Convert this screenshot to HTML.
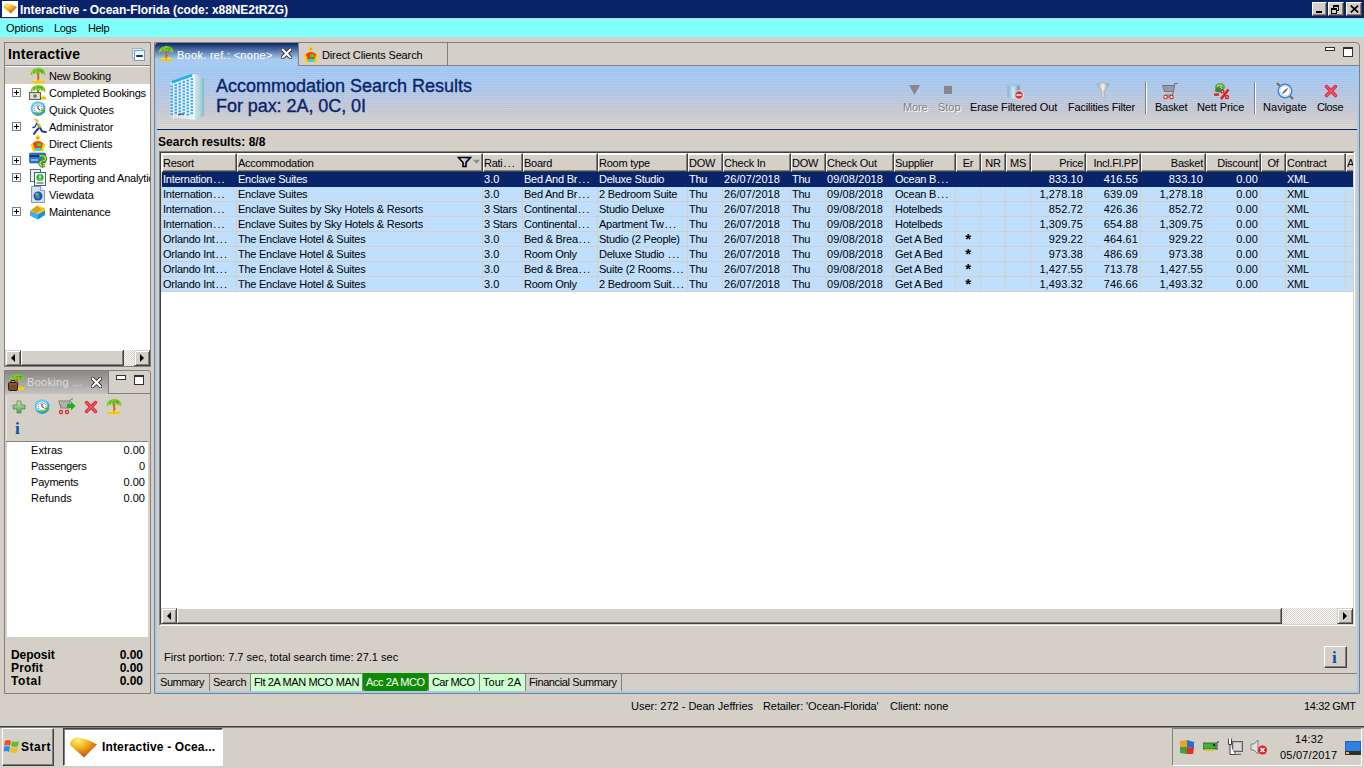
<!DOCTYPE html><html><head><meta charset="utf-8"><style>
*{margin:0;padding:0;box-sizing:border-box}
html,body{width:1364px;height:768px;overflow:hidden;background:#D4D0C8;font-family:"Liberation Sans", sans-serif;font-size:11px;color:#000}
.a{position:absolute}
.t{position:absolute;white-space:nowrap;line-height:13px}
.b{font-weight:bold}
</style></head><body><div class="a" style="left:0;top:0;width:1364px;height:18px;background:#0A246A"></div>
<div class="a" style="left:2px;top:1px;width:16px;height:16px;background:#fff"></div>
<svg class="a" style="left:2px;top:1px" width="16" height="16" viewBox="0 0 16 16"><defs><radialGradient id="gic" cx="0.3" cy="0.2" r="0.95"><stop offset="0" stop-color="#FFF070"/><stop offset="0.4" stop-color="#F4B020"/><stop offset="0.8" stop-color="#D06010"/><stop offset="1" stop-color="#B04010"/></radialGradient></defs><path d="M1.5 6.5 Q2 2.5 5.5 2.5 Q10.5 3.5 15 6 L9 12.5 Z" fill="url(#gic)"/></svg>
<div class="t b" style="left:20px;top:3px;color:#fff;font-size:12px;line-height:14px;letter-spacing:-0.061px;">Interactive - Ocean-Florida (code: x88NE2tRZG)</div>
<div class="a" style="left:1312px;top:2px;width:15px;height:14px;background:#D4D0C8;border-top:1px solid #fff;border-left:1px solid #fff;border-right:1px solid #404040;border-bottom:1px solid #404040;box-shadow:inset -1px -1px 0 #808080"><div class="a" style="left:3px;top:8px;width:6px;height:2px;background:#000"></div></div>
<div class="a" style="left:1328px;top:2px;width:16px;height:14px;background:#D4D0C8;border-top:1px solid #fff;border-left:1px solid #fff;border-right:1px solid #404040;border-bottom:1px solid #404040;box-shadow:inset -1px -1px 0 #808080"><div class="a" style="left:4px;top:2px;width:6px;height:6px;border:1px solid #000;border-top-width:2px"></div><div class="a" style="left:2px;top:5px;width:6px;height:6px;border:1px solid #000;border-top-width:2px;background:#D4D0C8"></div></div>
<div class="a" style="left:1346px;top:2px;width:16px;height:14px;background:#D4D0C8;border-top:1px solid #fff;border-left:1px solid #fff;border-right:1px solid #404040;border-bottom:1px solid #404040;box-shadow:inset -1px -1px 0 #808080"><svg class="a" style="left:3px;top:2px" width="9" height="8"><path d="M0.8 0.6 L8.2 7.4 M8.2 0.6 L0.8 7.4" stroke="#000" stroke-width="1.8"/></svg></div>
<div class="a" style="left:0;top:18px;width:1364px;height:1px;background:#d4d0c8"></div>
<div class="a" style="left:0;top:19px;width:1364px;height:18px;background:#80FFFF"></div>
<div class="t" style="left:6px;top:22px;letter-spacing:-0.068px;">Options</div>
<div class="t" style="left:54px;top:22px;letter-spacing:-0.384px;">Logs</div>
<div class="t" style="left:88px;top:22px;letter-spacing:-0.374px;">Help</div>
<div class="a" style="left:4px;top:42px;width:147px;height:325px;border:1px solid #808080;background:#D4D0C8"></div>
<div class="t b" style="left:8px;top:46px;font-size:14px;line-height:16px;letter-spacing:0.197px;">Interactive</div>
<div class="a" style="left:132px;top:48px;width:11px;height:11px;border:1px solid #a0b0d0;background:#d8f0ff"></div>
<div class="a" style="left:134px;top:50px;width:11px;height:11px;border:1px solid #8898b8;background:linear-gradient(#e0f6ff,#fff)"><div class="a" style="left:1px;top:4px;width:7px;height:1.5px;background:#063a78;border-radius:1px"></div></div>
<div class="a" style="left:5px;top:65px;width:145px;height:1px;background:#808080"></div>
<div class="a" style="left:5px;top:66px;width:145px;height:1px;background:#fff"></div>
<div class="a" style="left:5px;top:67px;width:145px;height:283px;background:#fff"></div>
<div class="a" style="left:5px;top:67px;width:145px;height:17px;background:#D4D0C8"></div>
<div class="a" style="left:5px;top:67px;width:145px;height:160px;overflow:hidden">
<div class="t" style="left:44px;top:3px;letter-spacing:-0.281px;">New Booking</div>
<div class="a" style="left:7px;top:21px;width:9px;height:9px;border:1px solid #808080;background:#fff"><div class="a" style="left:1px;top:3px;width:5px;height:1px;background:#000"></div><div class="a" style="left:3px;top:1px;width:1px;height:5px;background:#000"></div></div>
<div class="t" style="left:44px;top:20px;letter-spacing:-0.265px;">Completed Bookings</div>
<div class="t" style="left:44px;top:37px;letter-spacing:-0.149px;">Quick Quotes</div>
<div class="a" style="left:7px;top:55px;width:9px;height:9px;border:1px solid #808080;background:#fff"><div class="a" style="left:1px;top:3px;width:5px;height:1px;background:#000"></div><div class="a" style="left:3px;top:1px;width:1px;height:5px;background:#000"></div></div>
<div class="t" style="left:44px;top:54px;letter-spacing:-0.024px;">Administrator</div>
<div class="t" style="left:44px;top:71px;letter-spacing:-0.146px;">Direct Clients</div>
<div class="a" style="left:7px;top:89px;width:9px;height:9px;border:1px solid #808080;background:#fff"><div class="a" style="left:1px;top:3px;width:5px;height:1px;background:#000"></div><div class="a" style="left:3px;top:1px;width:1px;height:5px;background:#000"></div></div>
<div class="t" style="left:44px;top:88px;letter-spacing:-0.201px;">Payments</div>
<div class="a" style="left:7px;top:106px;width:9px;height:9px;border:1px solid #808080;background:#fff"><div class="a" style="left:1px;top:3px;width:5px;height:1px;background:#000"></div><div class="a" style="left:3px;top:1px;width:1px;height:5px;background:#000"></div></div>
<div class="t" style="left:44px;top:105px;letter-spacing:-0.25px;">Reporting and Analytics</div>
<div class="t" style="left:44px;top:122px;letter-spacing:-0.036px;">Viewdata</div>
<div class="a" style="left:7px;top:140px;width:9px;height:9px;border:1px solid #808080;background:#fff"><div class="a" style="left:1px;top:3px;width:5px;height:1px;background:#000"></div><div class="a" style="left:3px;top:1px;width:1px;height:5px;background:#000"></div></div>
<div class="t" style="left:44px;top:139px;letter-spacing:-0.128px;">Maintenance</div>
</div>
<svg class="a" style="left:30px;top:67px" width="16" height="17" viewBox="0 0 16 17"><path d="M1 14.5 Q2 12.8 8 12.8 Q14 12.8 15 14 Q14 16 8 16 Q2 16 1 14.5Z" fill="#F4C800"/><path d="M3 13.6 Q8 12.6 13 13.4" stroke="#FFE860" stroke-width="1" fill="none"/><path d="M7.5 5 Q8.5 8 8.2 13.5" stroke="#D07818" stroke-width="2" fill="none"/><path d="M8.2 7 L8.6 7.6 M8.4 10 L8.8 10.6" stroke="#703000" stroke-width="1"/><path d="M0.5 7.5 Q1 2.5 6 1.5 Q8 0 10 1.3 Q15 2 15.5 7 L14.5 8.5 L13 6 L12 8 L10.5 5 L9.5 7 L8 4.5 L6.5 7 L5.5 5 L4 8 L3 6 L1.5 8.5Z" fill="#7CCB28"/><path d="M3 4 Q6 2 8 4 M8 4 Q10 2 13 4 M5 3 L4 6 M11 3 L12 6" stroke="#4A9A10" stroke-width="0.8" fill="none"/><path d="M2 6 Q4 3 7 3" stroke="#A8E040" stroke-width="0.7" fill="none"/></svg>
<svg class="a" style="left:30px;top:84px" width="16" height="17" viewBox="0 0 16 17"><path d="M7.5 5 Q8.5 8 8.2 13.5" stroke="#D07818" stroke-width="2" fill="none"/><path d="M8.2 7 L8.6 7.6 M8.4 10 L8.8 10.6" stroke="#703000" stroke-width="1"/><path d="M0.5 7.5 Q1 2.5 6 1.5 Q8 0 10 1.3 Q15 2 15.5 7 L14.5 8.5 L13 6 L12 8 L10.5 5 L9.5 7 L8 4.5 L6.5 7 L5.5 5 L4 8 L3 6 L1.5 8.5Z" fill="#7CCB28"/><path d="M3 4 Q6 2 8 4 M8 4 Q10 2 13 4 M5 3 L4 6 M11 3 L12 6" stroke="#4A9A10" stroke-width="0.8" fill="none"/><path d="M2 6 Q4 3 7 3" stroke="#A8E040" stroke-width="0.7" fill="none"/></svg>
<svg class="a" style="left:29px;top:92px" width="18" height="9" viewBox="0 0 18 9"><rect x="0.5" y="0.5" width="11" height="7" fill="#C8C8B0" stroke="#606050"/><rect x="1.5" y="1.5" width="9" height="5" fill="#E0E0D0"/><circle cx="6" cy="4" r="1.8" fill="#707060"/><path d="M12 5 H17 V7.5 H12Z" fill="#F0C000"/><path d="M13 3.5 H16 V5 H13Z" fill="#FFE040"/></svg>
<svg class="a" style="left:30px;top:101px" width="16" height="16" viewBox="0 0 16 16"><defs><radialGradient id="cring" cx="0.4" cy="0.35" r="0.7"><stop offset="0.6" stop-color="#60C8FF"/><stop offset="1" stop-color="#1070E0"/></radialGradient></defs><circle cx="8" cy="7.6" r="7.4" fill="url(#cring)"/><circle cx="8" cy="7.6" r="5.2" fill="#fff"/><rect x="7.6" y="3.2" width="0.8" height="1.2" fill="#606060" transform="rotate(0 8 7.6)"/><rect x="7.6" y="3.2" width="0.8" height="1.2" fill="#606060" transform="rotate(30 8 7.6)"/><rect x="7.6" y="3.2" width="0.8" height="1.2" fill="#606060" transform="rotate(60 8 7.6)"/><rect x="7.6" y="3.2" width="0.8" height="1.2" fill="#606060" transform="rotate(90 8 7.6)"/><rect x="7.6" y="3.2" width="0.8" height="1.2" fill="#606060" transform="rotate(120 8 7.6)"/><rect x="7.6" y="3.2" width="0.8" height="1.2" fill="#606060" transform="rotate(150 8 7.6)"/><rect x="7.6" y="3.2" width="0.8" height="1.2" fill="#606060" transform="rotate(180 8 7.6)"/><rect x="7.6" y="3.2" width="0.8" height="1.2" fill="#606060" transform="rotate(210 8 7.6)"/><rect x="7.6" y="3.2" width="0.8" height="1.2" fill="#606060" transform="rotate(240 8 7.6)"/><rect x="7.6" y="3.2" width="0.8" height="1.2" fill="#606060" transform="rotate(270 8 7.6)"/><rect x="7.6" y="3.2" width="0.8" height="1.2" fill="#606060" transform="rotate(300 8 7.6)"/><rect x="7.6" y="3.2" width="0.8" height="1.2" fill="#606060" transform="rotate(330 8 7.6)"/><path d="M8 4.6 V7.6 L10 9" stroke="#303030" stroke-width="1" fill="none"/><path d="M3.5 11.5 Q7.5 15.5 13.5 10.5 L15.2 12.6 L14.8 7.4 L10.2 9.2 L12 10.2 Q8.5 13 5 11Z" fill="#40C030"/></svg>
<svg class="a" style="left:30px;top:118px" width="17" height="17" viewBox="0 0 17 17"><path d="M4 1 L7 2.5" stroke="#F0B020" stroke-width="1.2"/><circle cx="7" cy="3" r="1.7" fill="#F0C040"/><path d="M6 5 L10 6 L11.5 10 L8.5 11Z" fill="#70B840"/><path d="M9 6 L11 9" stroke="#E8D040" stroke-width="1.4"/><path d="M6.5 5.5 L5 9 L3 9.5" stroke="#2838A8" stroke-width="1.4" fill="none" stroke-linecap="round"/><path d="M8.5 10.5 L6 13 L4 16" stroke="#1A2A90" stroke-width="1.8" fill="none" stroke-linecap="round"/><path d="M10.5 10.5 L12 13.5 L16 14" stroke="#1A2A90" stroke-width="1.8" fill="none" stroke-linecap="round"/></svg>
<svg class="a" style="left:30px;top:135px" width="16" height="17" viewBox="0 0 16 17"><circle cx="7.8" cy="2.6" r="2.3" fill="#F8D020"/><circle cx="7.8" cy="2.9" r="0.9" fill="#F08010"/><path d="M2.5 8.5 Q8 3.6 13.5 8.5 L12.8 15.5 L3.2 15.5Z" fill="#FF3A08"/><path d="M2.2 10 L3.8 15.5" stroke="#FFD000" stroke-width="2.6" stroke-linecap="round"/><path d="M13.8 10 L12.2 15.5" stroke="#FFD000" stroke-width="2.6" stroke-linecap="round"/><path d="M7.5 5 L8.5 5" stroke="#FFD040" stroke-width="1.5"/><rect x="7.2" y="8.2" width="4" height="3" fill="#30E030"/><rect x="5" y="13" width="6.5" height="2.6" fill="#10E8E8"/></svg>
<svg class="a" style="left:29px;top:152px" width="18" height="17" viewBox="0 0 18 17"><rect x="0.5" y="1" width="16" height="10" rx="1" fill="#2878D0" stroke="#1858A0" stroke-width="0.6"/><rect x="0.5" y="3" width="16" height="2" fill="#103870"/><rect x="2" y="7" width="7" height="2" fill="#80B8F0"/><path d="M10.5 4 Q15.5 3 16.5 6 Q17 8.5 13.5 9 Q10.5 9.5 11 12 Q11.5 14.5 16 13.5" stroke="#208020" stroke-width="3.2" fill="none"/><path d="M10.5 4 Q15.5 3 16.5 6 Q17 8.5 13.5 9 Q10.5 9.5 11 12 Q11.5 14.5 16 13.5" stroke="#C0E040" stroke-width="1.6" fill="none"/><path d="M13.5 2 V16" stroke="#60A020" stroke-width="1.2"/></svg>
<svg class="a" style="left:30px;top:169px" width="16" height="17" viewBox="0 0 16 17"><rect x="0.5" y="0.5" width="10" height="12" fill="#E8F0F0" stroke="#507878"/><rect x="4.5" y="3.5" width="11" height="13" fill="#F8FCFC" stroke="#406868"/><circle cx="10" cy="8.5" r="3.6" fill="#30B030"/><path d="M10 6.2 V9.2" stroke="#fff" stroke-width="1.4"/><circle cx="10" cy="10.8" r="0.7" fill="#fff"/><path d="M6.5 14 H13.5" stroke="#404040" stroke-width="1"/></svg>
<svg class="a" style="left:30px;top:186px" width="16" height="17" viewBox="0 0 16 17"><path d="M1.5 0.5 H10.5 L14.5 4.5 V16.5 H1.5Z" fill="#D8E0F0" stroke="#8898B8"/><path d="M10.5 0.5 V4.5 H14.5" fill="#fff" stroke="#8898B8"/><circle cx="8" cy="10" r="4.5" fill="#2050C8"/><path d="M5.5 8 Q7.5 6 9.5 8 Q8.5 10 10 12 Q7 13.5 5.5 11Z" fill="#40A850"/><circle cx="6.5" cy="8" r="1.2" fill="#80C0FF" opacity="0.7"/></svg>
<svg class="a" style="left:29px;top:203px" width="17" height="17" viewBox="0 0 17 17"><path d="M1 8 L9 11 L16 7 L16 12 L9 16.5 L1 12.5Z" fill="#1890D8"/><path d="M1 8 L9 11 L9 16.5 L1 12.5Z" fill="#40B0F0"/><path d="M1 7.5 L8 2.5 L16 5 L16 7.5 L9 11Z" fill="#F8C820"/><path d="M2.5 7 L9 3.5 M3.5 8 L10 4.5 M4.5 9 L11 5.5 M6 9.8 L12.5 6.2" stroke="#C08810" stroke-width="0.9"/><path d="M1 7.5 L8 2.5 L16 5" stroke="#FFE870" stroke-width="0.8" fill="none"/></svg>
<div class="a" style="left:5px;top:350px;width:145px;height:16px;background:#D4D0C8"></div>
<div class="a" style="left:5px;top:350px;width:16px;height:16px;background:#D4D0C8;border-top:1px solid #D4D0C8;border-left:1px solid #D4D0C8;border-right:1px solid #404040;border-bottom:1px solid #404040;box-shadow:inset 1px 1px 0 #fff, inset -1px -1px 0 #808080"><div class="a" style="left:5px;top:3px;width:0;height:0;border-top:4px solid transparent;border-bottom:4px solid transparent;border-right:4px solid #000"></div></div>
<div class="a" style="left:21px;top:350px;width:103px;height:16px;background:#D4D0C8;border-right:1px solid #404040;border-bottom:1px solid #404040;box-shadow:inset 1px 1px 0 #fff, inset -1px -1px 0 #808080"></div>
<div class="a" style="left:124px;top:350px;width:10px;height:16px;background:repeating-conic-gradient(#fff 0 25%, #D4D0C8 0 50%) 0 0/2px 2px"></div>
<div class="a" style="left:134px;top:350px;width:16px;height:16px;background:#D4D0C8;border-top:1px solid #D4D0C8;border-left:1px solid #D4D0C8;border-right:1px solid #404040;border-bottom:1px solid #404040;box-shadow:inset 1px 1px 0 #fff, inset -1px -1px 0 #808080"><div class="a" style="left:5px;top:3px;width:0;height:0;border-top:4px solid transparent;border-bottom:4px solid transparent;border-left:4px solid #000"></div></div>
<div class="a" style="left:4px;top:370px;width:147px;height:324px;border:1px solid #808080;border-top-right-radius:3px;background:#D4D0C8"></div>
<div class="a" style="left:5px;top:371px;width:104px;height:23px;background:linear-gradient(#8a8886,#c4c2c0)"></div>
<div class="a" style="left:108px;top:371px;width:1px;height:23px;background:#808080"></div>
<div class="a" style="left:109px;top:393px;width:41px;height:1px;background:#808080"></div>
<svg class="a" style="left:9px;top:373px" width="16" height="17" viewBox="0 0 16 17"><path d="M7.5 5 Q8.5 8 8.2 13.5" stroke="#D07818" stroke-width="2" fill="none"/><path d="M8.2 7 L8.6 7.6 M8.4 10 L8.8 10.6" stroke="#703000" stroke-width="1"/><path d="M0.5 7.5 Q1 2.5 6 1.5 Q8 0 10 1.3 Q15 2 15.5 7 L14.5 8.5 L13 6 L12 8 L10.5 5 L9.5 7 L8 4.5 L6.5 7 L5.5 5 L4 8 L3 6 L1.5 8.5Z" fill="#7CCB28"/><path d="M3 4 Q6 2 8 4 M8 4 Q10 2 13 4 M5 3 L4 6 M11 3 L12 6" stroke="#4A9A10" stroke-width="0.8" fill="none"/><path d="M2 6 Q4 3 7 3" stroke="#A8E040" stroke-width="0.7" fill="none"/></svg>
<svg class="a" style="left:7px;top:379px" width="18" height="12" viewBox="0 0 18 12"><path d="M11 8 Q14 7 17 8 L17 11 L11 11Z" fill="#F8D000"/><rect x="1.5" y="3.5" width="9" height="8" rx="1" fill="#7A4A28" stroke="#302010"/><path d="M4 3.5 V1.5 H8 V3.5" stroke="#302010" fill="none"/><path d="M2 5 H10" stroke="#A07048" stroke-width="0.8"/></svg>
<div class="t" style="left:27px;top:376px;color:#dcdcdc;letter-spacing:0.3px">Booking ...</div>
<svg class="a" style="left:91px;top:377px" width="11" height="11" viewBox="0 0 11 11"><path d="M1.8 1.8 L9.2 9.2 M9.2 1.8 L1.8 9.2" stroke="#303030" stroke-width="4" stroke-linecap="square"/><path d="M1.8 1.8 L9.2 9.2 M9.2 1.8 L1.8 9.2" stroke="#fff" stroke-width="2.1" stroke-linecap="square"/></svg>
<div class="a" style="left:116px;top:375px;width:10px;height:5px;border:1px solid #303030;background:#fff"></div>
<div class="a" style="left:134px;top:375px;width:10px;height:10px;border:1px solid #303030;border-top-width:2px;background:#fff"></div>
<svg class="a" style="left:12px;top:400px" width="14" height="14" viewBox="0 0 14 14"><defs><linearGradient id="plg" x1="0" y1="0" x2="0" y2="1"><stop offset="0" stop-color="#D8E880"/><stop offset="1" stop-color="#50A070"/></linearGradient></defs><path d="M5 1 H9 V5 H13 V9 H9 V13 H5 V9 H1 V5 H5Z" fill="url(#plg)" stroke="#408060" stroke-width="0.7"/></svg>
<svg class="a" style="left:34px;top:399px" width="16" height="16" viewBox="0 0 16 16"><defs><radialGradient id="cring" cx="0.4" cy="0.35" r="0.7"><stop offset="0.6" stop-color="#60C8FF"/><stop offset="1" stop-color="#1070E0"/></radialGradient></defs><circle cx="8" cy="7.6" r="7.4" fill="url(#cring)"/><circle cx="8" cy="7.6" r="5.2" fill="#fff"/><rect x="7.6" y="3.2" width="0.8" height="1.2" fill="#606060" transform="rotate(0 8 7.6)"/><rect x="7.6" y="3.2" width="0.8" height="1.2" fill="#606060" transform="rotate(30 8 7.6)"/><rect x="7.6" y="3.2" width="0.8" height="1.2" fill="#606060" transform="rotate(60 8 7.6)"/><rect x="7.6" y="3.2" width="0.8" height="1.2" fill="#606060" transform="rotate(90 8 7.6)"/><rect x="7.6" y="3.2" width="0.8" height="1.2" fill="#606060" transform="rotate(120 8 7.6)"/><rect x="7.6" y="3.2" width="0.8" height="1.2" fill="#606060" transform="rotate(150 8 7.6)"/><rect x="7.6" y="3.2" width="0.8" height="1.2" fill="#606060" transform="rotate(180 8 7.6)"/><rect x="7.6" y="3.2" width="0.8" height="1.2" fill="#606060" transform="rotate(210 8 7.6)"/><rect x="7.6" y="3.2" width="0.8" height="1.2" fill="#606060" transform="rotate(240 8 7.6)"/><rect x="7.6" y="3.2" width="0.8" height="1.2" fill="#606060" transform="rotate(270 8 7.6)"/><rect x="7.6" y="3.2" width="0.8" height="1.2" fill="#606060" transform="rotate(300 8 7.6)"/><rect x="7.6" y="3.2" width="0.8" height="1.2" fill="#606060" transform="rotate(330 8 7.6)"/><path d="M8 4.6 V7.6 L10 9" stroke="#303030" stroke-width="1" fill="none"/><path d="M3.5 11.5 Q7.5 15.5 13.5 10.5 L15.2 12.6 L14.8 7.4 L10.2 9.2 L12 10.2 Q8.5 13 5 11Z" fill="#40C030"/></svg>
<svg class="a" style="left:58px;top:398px" width="18" height="17" viewBox="0 0 18 17"><path d="M1 3 H12 L11 10 H3Z" fill="none" stroke="#808080" stroke-width="1.2"/><path d="M4 3 V10 M6 3 V10 M8 3 V10 M10 3 V10" stroke="#909090"/><path d="M12 3 L13 1 H15" stroke="#808080" fill="none"/><circle cx="3" cy="14" r="1.6" fill="none" stroke="#e02020" stroke-width="1.2"/><circle cx="9" cy="14" r="1.6" fill="none" stroke="#e02020" stroke-width="1.2"/><path d="M9 6 H13 V3.5 L17.5 8 L13 12.5 V10 H9Z" fill="#20b020"/></svg>
<svg class="a" style="left:84px;top:400px" width="14" height="14" viewBox="0 0 14 14"><path d="M2.5 2.5 L11.5 11.5 M11.5 2.5 L2.5 11.5" stroke="#D82838" stroke-width="3.4" stroke-linecap="round"/><path d="M2.5 2.5 L11.5 11.5 M11.5 2.5 L2.5 11.5" stroke="#F06070" stroke-width="1.2" stroke-linecap="round"/></svg>
<svg class="a" style="left:106px;top:398px" width="16" height="17" viewBox="0 0 16 17"><path d="M1 14.5 Q2 12.8 8 12.8 Q14 12.8 15 14 Q14 16 8 16 Q2 16 1 14.5Z" fill="#F4C800"/><path d="M3 13.6 Q8 12.6 13 13.4" stroke="#FFE860" stroke-width="1" fill="none"/><path d="M7.5 5 Q8.5 8 8.2 13.5" stroke="#D07818" stroke-width="2" fill="none"/><path d="M8.2 7 L8.6 7.6 M8.4 10 L8.8 10.6" stroke="#703000" stroke-width="1"/><path d="M0.5 7.5 Q1 2.5 6 1.5 Q8 0 10 1.3 Q15 2 15.5 7 L14.5 8.5 L13 6 L12 8 L10.5 5 L9.5 7 L8 4.5 L6.5 7 L5.5 5 L4 8 L3 6 L1.5 8.5Z" fill="#7CCB28"/><path d="M3 4 Q6 2 8 4 M8 4 Q10 2 13 4 M5 3 L4 6 M11 3 L12 6" stroke="#4A9A10" stroke-width="0.8" fill="none"/><path d="M2 6 Q4 3 7 3" stroke="#A8E040" stroke-width="0.7" fill="none"/></svg>
<div class="t b" style="left:15px;top:421px;font-family:'Liberation Serif',serif;font-size:17px;line-height:15px;color:#0850A0">i</div>
<div class="a" style="left:6px;top:396px;width:1px;height:45px;background:#e8e6e2"></div>
<div class="a" style="left:6px;top:441px;width:142px;height:1px;background:#808080"></div>
<div class="a" style="left:7px;top:442px;width:141px;height:195px;background:#fff"></div>
<div class="t" style="left:31px;top:444px;letter-spacing:0.085px;">Extras</div>
<div class="t" style="left:100px;top:444px;width:45px;text-align:right">0.00</div>
<div class="t" style="left:31px;top:460px;letter-spacing:-0.265px;">Passengers</div>
<div class="t" style="left:100px;top:460px;width:45px;text-align:right">0</div>
<div class="t" style="left:31px;top:476px;letter-spacing:-0.187px;">Payments</div>
<div class="t" style="left:100px;top:476px;width:45px;text-align:right">0.00</div>
<div class="t" style="left:31px;top:492px;letter-spacing:-0.045px;">Refunds</div>
<div class="t" style="left:100px;top:492px;width:45px;text-align:right">0.00</div>
<div class="t b" style="left:11px;top:649px;font-size:12px;letter-spacing:-0.051px;">Deposit</div>
<div class="t b" style="left:90px;top:649px;width:53px;text-align:right;font-size:12px">0.00</div>
<div class="t b" style="left:11px;top:662px;font-size:12px;letter-spacing:0.133px;">Profit</div>
<div class="t b" style="left:90px;top:662px;width:53px;text-align:right;font-size:12px">0.00</div>
<div class="t b" style="left:11px;top:675px;font-size:12px;letter-spacing:0.582px;">Total</div>
<div class="t b" style="left:90px;top:675px;width:53px;text-align:right;font-size:12px">0.00</div>
<div class="a" style="left:154px;top:42px;width:1206px;height:652px;border:1px solid #808080;border-top-right-radius:4px;background:#D4D0C8"></div>
<div class="a" style="left:298px;top:65px;width:1061px;height:1px;background:#808080"></div>
<div class="a" style="left:155px;top:43px;width:143px;height:23px;background:linear-gradient(#0A246A 0px,#A6CAF0 16px,#A6CAF0 23px);border-top-left-radius:3px"></div>
<svg class="a" style="left:158px;top:45px" width="16" height="17" viewBox="0 0 16 17"><path d="M1 14.5 Q2 12.8 8 12.8 Q14 12.8 15 14 Q14 16 8 16 Q2 16 1 14.5Z" fill="#F4C800"/><path d="M3 13.6 Q8 12.6 13 13.4" stroke="#FFE860" stroke-width="1" fill="none"/><path d="M7.5 5 Q8.5 8 8.2 13.5" stroke="#D07818" stroke-width="2" fill="none"/><path d="M8.2 7 L8.6 7.6 M8.4 10 L8.8 10.6" stroke="#703000" stroke-width="1"/><path d="M0.5 7.5 Q1 2.5 6 1.5 Q8 0 10 1.3 Q15 2 15.5 7 L14.5 8.5 L13 6 L12 8 L10.5 5 L9.5 7 L8 4.5 L6.5 7 L5.5 5 L4 8 L3 6 L1.5 8.5Z" fill="#7CCB28"/><path d="M3 4 Q6 2 8 4 M8 4 Q10 2 13 4 M5 3 L4 6 M11 3 L12 6" stroke="#4A9A10" stroke-width="0.8" fill="none"/><path d="M2 6 Q4 3 7 3" stroke="#A8E040" stroke-width="0.7" fill="none"/></svg>
<div class="t" style="left:177px;top:49px;color:#fff;letter-spacing:0.288px;">Book. ref.: &lt;none&gt;</div>
<svg class="a" style="left:281px;top:48px" width="11" height="11" viewBox="0 0 11 11"><path d="M1.8 1.8 L9.2 9.2 M9.2 1.8 L1.8 9.2" stroke="#303030" stroke-width="4" stroke-linecap="square"/><path d="M1.8 1.8 L9.2 9.2 M9.2 1.8 L1.8 9.2" stroke="#fff" stroke-width="2.1" stroke-linecap="square"/></svg>
<div class="a" style="left:298px;top:43px;width:1px;height:22px;background:#808080"></div>
<div class="a" style="left:447px;top:43px;width:1px;height:22px;background:#808080"></div>
<svg class="a" style="left:303px;top:46px" width="16" height="17" viewBox="0 0 16 17"><circle cx="7.8" cy="2.6" r="2.3" fill="#F8D020"/><circle cx="7.8" cy="2.9" r="0.9" fill="#F08010"/><path d="M2.5 8.5 Q8 3.6 13.5 8.5 L12.8 15.5 L3.2 15.5Z" fill="#FF3A08"/><path d="M2.2 10 L3.8 15.5" stroke="#FFD000" stroke-width="2.6" stroke-linecap="round"/><path d="M13.8 10 L12.2 15.5" stroke="#FFD000" stroke-width="2.6" stroke-linecap="round"/><path d="M7.5 5 L8.5 5" stroke="#FFD040" stroke-width="1.5"/><rect x="7.2" y="8.2" width="4" height="3" fill="#30E030"/><rect x="5" y="13" width="6.5" height="2.6" fill="#10E8E8"/></svg>
<div class="t" style="left:322px;top:49px;letter-spacing:-0.135px;">Direct Clients Search</div>
<div class="a" style="left:1325px;top:47px;width:10px;height:4px;border:1px solid #303030;background:#fff"></div>
<div class="a" style="left:1343px;top:47px;width:10px;height:10px;border:1px solid #303030;border-top-width:2px;background:#fff"></div>
<div class="a" style="left:155px;top:66px;width:1204px;height:627px;border:2px solid #A6CAF0;border-top:0"></div>
<div class="a" style="left:157px;top:66px;width:1200px;height:63px;background:repeating-linear-gradient(rgba(255,255,255,0) 0 1px, rgba(0,0,0,0.04) 1px 2px),linear-gradient(#A4CCF8 0%,#B2CCEE 35%,#CACCD8 70%,#DEDAD2 100%)"></div>
<div class="a" style="left:157px;top:129px;width:1200px;height:1px;background:#0A246A"></div>
<svg class="a" style="left:168px;top:73px" width="38" height="48" viewBox="0 0 38 48"><defs><linearGradient id="hside" x1="0" x2="1"><stop offset="0" stop-color="#d0e4e8"/><stop offset="0.6" stop-color="#a8d4dc"/><stop offset="1" stop-color="#88b8c4"/></linearGradient><linearGradient id="hfront" x1="0" x2="1"><stop offset="0" stop-color="#d0dce4"/><stop offset="1" stop-color="#f0f6fa"/></linearGradient></defs><path d="M2 10 L27 1 L27 47 L2 44Z" fill="url(#hfront)"/><path d="M27 1 L36 5 L36 43 L27 47Z" fill="url(#hside)"/><rect x="2.5" y="12.5" width="2.6" height="1.7" fill="#30A8F0"/><rect x="6.5" y="11.05" width="2.6" height="1.7" fill="#30A8F0"/><rect x="10.5" y="9.6" width="2.6" height="1.7" fill="#30A8F0"/><rect x="14.5" y="8.15" width="2.6" height="1.7" fill="#30A8F0"/><rect x="18.5" y="6.7" width="2.6" height="1.7" fill="#30A8F0"/><rect x="22.5" y="5.25" width="2.6" height="1.7" fill="#30A8F0"/><rect x="2.5" y="15.6" width="2.6" height="1.7" fill="#30A8F0"/><rect x="6.5" y="14.15" width="2.6" height="1.7" fill="#30A8F0"/><rect x="10.5" y="12.7" width="2.6" height="1.7" fill="#30A8F0"/><rect x="14.5" y="11.25" width="2.6" height="1.7" fill="#30A8F0"/><rect x="18.5" y="9.8" width="2.6" height="1.7" fill="#30A8F0"/><rect x="22.5" y="8.35" width="2.6" height="1.7" fill="#30A8F0"/><rect x="2.5" y="18.7" width="2.6" height="1.7" fill="#30A8F0"/><rect x="6.5" y="17.25" width="2.6" height="1.7" fill="#30A8F0"/><rect x="10.5" y="15.799999999999999" width="2.6" height="1.7" fill="#30A8F0"/><rect x="14.5" y="14.35" width="2.6" height="1.7" fill="#30A8F0"/><rect x="18.5" y="12.899999999999999" width="2.6" height="1.7" fill="#30A8F0"/><rect x="22.5" y="11.45" width="2.6" height="1.7" fill="#30A8F0"/><rect x="2.5" y="21.8" width="2.6" height="1.7" fill="#30A8F0"/><rect x="6.5" y="20.35" width="2.6" height="1.7" fill="#30A8F0"/><rect x="10.5" y="18.900000000000002" width="2.6" height="1.7" fill="#30A8F0"/><rect x="14.5" y="17.450000000000003" width="2.6" height="1.7" fill="#30A8F0"/><rect x="18.5" y="16.0" width="2.6" height="1.7" fill="#30A8F0"/><rect x="22.5" y="14.55" width="2.6" height="1.7" fill="#30A8F0"/><rect x="2.5" y="24.9" width="2.6" height="1.7" fill="#30A8F0"/><rect x="6.5" y="23.45" width="2.6" height="1.7" fill="#30A8F0"/><rect x="10.5" y="22.0" width="2.6" height="1.7" fill="#30A8F0"/><rect x="14.5" y="20.549999999999997" width="2.6" height="1.7" fill="#30A8F0"/><rect x="18.5" y="19.099999999999998" width="2.6" height="1.7" fill="#30A8F0"/><rect x="22.5" y="17.65" width="2.6" height="1.7" fill="#30A8F0"/><rect x="2.5" y="28.0" width="2.6" height="1.7" fill="#30A8F0"/><rect x="6.5" y="26.55" width="2.6" height="1.7" fill="#30A8F0"/><rect x="10.5" y="25.1" width="2.6" height="1.7" fill="#30A8F0"/><rect x="14.5" y="23.65" width="2.6" height="1.7" fill="#30A8F0"/><rect x="18.5" y="22.2" width="2.6" height="1.7" fill="#30A8F0"/><rect x="22.5" y="20.75" width="2.6" height="1.7" fill="#30A8F0"/><rect x="2.5" y="31.1" width="2.6" height="1.7" fill="#30A8F0"/><rect x="6.5" y="29.650000000000002" width="2.6" height="1.7" fill="#30A8F0"/><rect x="10.5" y="28.200000000000003" width="2.6" height="1.7" fill="#30A8F0"/><rect x="14.5" y="26.75" width="2.6" height="1.7" fill="#30A8F0"/><rect x="18.5" y="25.3" width="2.6" height="1.7" fill="#30A8F0"/><rect x="22.5" y="23.85" width="2.6" height="1.7" fill="#30A8F0"/><rect x="2.5" y="34.2" width="2.6" height="1.7" fill="#30A8F0"/><rect x="6.5" y="32.75" width="2.6" height="1.7" fill="#30A8F0"/><rect x="10.5" y="31.300000000000004" width="2.6" height="1.7" fill="#30A8F0"/><rect x="14.5" y="29.85" width="2.6" height="1.7" fill="#30A8F0"/><rect x="18.5" y="28.400000000000002" width="2.6" height="1.7" fill="#30A8F0"/><rect x="22.5" y="26.950000000000003" width="2.6" height="1.7" fill="#30A8F0"/><rect x="2.5" y="37.3" width="2.6" height="1.7" fill="#30A8F0"/><rect x="6.5" y="35.849999999999994" width="2.6" height="1.7" fill="#30A8F0"/><rect x="10.5" y="34.4" width="2.6" height="1.7" fill="#30A8F0"/><rect x="14.5" y="32.949999999999996" width="2.6" height="1.7" fill="#30A8F0"/><rect x="18.5" y="31.499999999999996" width="2.6" height="1.7" fill="#30A8F0"/><rect x="22.5" y="30.049999999999997" width="2.6" height="1.7" fill="#30A8F0"/><rect x="2.5" y="40.400000000000006" width="2.6" height="1.7" fill="#30A8F0"/><rect x="6.5" y="38.95" width="2.6" height="1.7" fill="#30A8F0"/><rect x="10.5" y="37.50000000000001" width="2.6" height="1.7" fill="#30A8F0"/><rect x="14.5" y="36.050000000000004" width="2.6" height="1.7" fill="#30A8F0"/><rect x="18.5" y="34.60000000000001" width="2.6" height="1.7" fill="#30A8F0"/><rect x="22.5" y="33.150000000000006" width="2.6" height="1.7" fill="#30A8F0"/><rect x="10.5" y="40.6" width="2.6" height="1.7" fill="#30A8F0"/><rect x="14.5" y="39.15" width="2.6" height="1.7" fill="#30A8F0"/><rect x="18.5" y="37.7" width="2.6" height="1.7" fill="#30A8F0"/><rect x="22.5" y="36.25" width="2.6" height="1.7" fill="#30A8F0"/><rect x="18.5" y="40.800000000000004" width="2.6" height="1.7" fill="#30A8F0"/><rect x="22.5" y="39.35" width="2.6" height="1.7" fill="#30A8F0"/><rect x="5.2" y="8.0" width="0.9" height="38" fill="#f8fcff" opacity="0.8"/><rect x="9.2" y="6.55" width="0.9" height="38" fill="#f8fcff" opacity="0.8"/><rect x="13.2" y="5.1" width="0.9" height="38" fill="#f8fcff" opacity="0.8"/><rect x="17.2" y="3.6500000000000004" width="0.9" height="38" fill="#f8fcff" opacity="0.8"/><rect x="21.2" y="2.2" width="0.9" height="38" fill="#f8fcff" opacity="0.8"/><path d="M4 9.3 L24 2.3" stroke="#20B0F0" stroke-width="2.6"/><path d="M10 42 Q13 40 16 42" stroke="#606870" stroke-width="1.5" fill="none"/></svg>
<div class="t" style="left:216px;top:76px;font-size:18px;line-height:20px;color:#0A246A;-webkit-text-stroke:0.35px #0A246A">Accommodation Search Results</div>
<div class="t" style="left:216px;top:96px;font-size:18px;line-height:20px;color:#0A246A;-webkit-text-stroke:0.35px #0A246A;letter-spacing:-0.060px;">For pax: 2A, 0C, 0I</div>
<svg class="a" style="left:909px;top:85px" width="12" height="11"><path d="M0 0 H11 L5.5 10Z" fill="#888"/></svg>
<div class="a" style="left:944px;top:86px;width:8px;height:8px;background:#888"></div>
<div class="t" style="left:903px;top:101px;color:#808080;text-shadow:1px 1px 0 #fff;letter-spacing:-0.153px;">More</div>
<div class="t" style="left:938px;top:101px;color:#808080;text-shadow:1px 1px 0 #fff;letter-spacing:-0.043px;">Stop</div>
<svg class="a" style="left:1006px;top:82px" width="18" height="18" viewBox="0 0 18 18"><defs><linearGradient id="ebin" x1="0" x2="1"><stop offset="0" stop-color="#80b0d0"/><stop offset="0.5" stop-color="#d0e8f8"/><stop offset="1" stop-color="#6090b0"/></linearGradient></defs><ellipse cx="7.5" cy="3" rx="6" ry="2" fill="#a0c8e0"/><path d="M1.5 3 V15 Q7.5 18 13.5 15 V3 Q7.5 6 1.5 3Z" fill="url(#ebin)"/><circle cx="13" cy="13" r="4.2" fill="#e03030" stroke="#fff" stroke-width="0.8"/><rect x="10.5" y="12.2" width="5" height="1.6" fill="#fff"/></svg>
<div class="t" style="left:970px;top:101px;letter-spacing:-0.121px;">Erase Filtered Out</div>
<svg class="a" style="left:1096px;top:82px" width="14" height="18" viewBox="0 0 14 18"><defs><linearGradient id="fun" x1="0" x2="1"><stop offset="0" stop-color="#a0a0a0"/><stop offset="0.5" stop-color="#f4f4f4"/><stop offset="1" stop-color="#909090"/></linearGradient></defs><path d="M1 2 Q7 0 13 2 L8 9 V16 L6 15 V9Z" fill="url(#fun)" stroke="#a0a0a0" stroke-width="0.6"/></svg>
<div class="t" style="left:1068px;top:101px;letter-spacing:-0.193px;">Facilities Filter</div>
<div class="a" style="left:1145px;top:82px;width:1px;height:32px;background:#808080"></div><div class="a" style="left:1146px;top:82px;width:1px;height:32px;background:#fff"></div>
<svg class="a" style="left:1162px;top:82px" width="17" height="18" viewBox="0 0 17 18"><path d="M0.5 3.5 H12.5 L11.5 9.5 H2.5Z" fill="none" stroke="#707070" stroke-width="1"/><path d="M3 3.5 V9.5 M5 3.5 V9.5 M7 3.5 V9.5 M9 3.5 V9.5 M11 3.5 V9.5" stroke="#707070" stroke-width="1"/><path d="M12.5 3.5 V1.5 H16 M11.5 9.5 L10.5 13 H3" stroke="#707070" stroke-width="1" fill="none"/><circle cx="3.5" cy="15" r="1.7" fill="#fff" stroke="#E02020" stroke-width="1.1"/><circle cx="9.5" cy="15" r="1.7" fill="#fff" stroke="#E02020" stroke-width="1.1"/><path d="M5.2 15 H7.8" stroke="#E02020" stroke-width="1"/></svg>
<div class="t" style="left:1155px;top:101px;letter-spacing:-0.226px;">Basket</div>
<svg class="a" style="left:1213px;top:82px" width="18" height="18" viewBox="0 0 18 18"><ellipse cx="7" cy="5" rx="5" ry="4" fill="#60A840"/><ellipse cx="6" cy="8" rx="4" ry="2.5" fill="#408830"/><path d="M4 4 Q7 2 9 4 Q6 6 9 7" stroke="#C8E8A0" stroke-width="1" fill="none"/><rect x="1" y="11.5" width="5" height="2.2" fill="#E01818"/><circle cx="9.5" cy="9.5" r="2" fill="#E01818"/><circle cx="14" cy="15" r="2.2" fill="#E01818"/><path d="M15.5 7.5 L8 17" stroke="#E01818" stroke-width="2.4"/><circle cx="9.5" cy="9.5" r="0.7" fill="#fff"/><circle cx="14" cy="15" r="0.7" fill="#fff"/></svg>
<div class="t" style="left:1197px;top:101px;letter-spacing:-0.110px;">Nett Price</div>
<div class="a" style="left:1254px;top:82px;width:1px;height:32px;background:#808080"></div><div class="a" style="left:1255px;top:82px;width:1px;height:32px;background:#fff"></div>
<svg class="a" style="left:1276px;top:82px" width="18" height="18" viewBox="0 0 18 18"><path d="M1 1 L4 4 M14 14 L17 17" stroke="#8A6A30" stroke-width="2.2"/><circle cx="9" cy="9" r="6.8" fill="#E8F4FC" stroke="#3A88D0" stroke-width="1.4"/><circle cx="9" cy="9" r="5" fill="#F8FCFF" stroke="#A8D0F0" stroke-width="0.6"/><path d="M12.5 5.5 L9.8 9.8 L8.2 8.2Z" fill="#E03020"/><path d="M5.5 12.5 L8.2 8.2 L9.8 9.8Z" fill="#2060C0"/></svg>
<div class="t" style="left:1263px;top:101px;letter-spacing:0.041px;">Navigate</div>
<svg class="a" style="left:1324px;top:84px" width="14" height="14" viewBox="0 0 14 14"><path d="M2.5 2.5 L11.5 11.5 M11.5 2.5 L2.5 11.5" stroke="#D82838" stroke-width="3.4" stroke-linecap="round"/><path d="M2.5 2.5 L11.5 11.5 M11.5 2.5 L2.5 11.5" stroke="#F06070" stroke-width="1.2" stroke-linecap="round"/></svg>
<div class="t" style="left:1317px;top:101px;letter-spacing:-0.405px;">Close</div>
<div class="t b" style="left:158px;top:135px;font-size:12px;line-height:14px;letter-spacing:0.038px;">Search results: 8/8</div>
<div class="a" style="left:159px;top:151px;width:1196px;height:475px;border-top:1px solid #808080;border-left:1px solid #808080;border-right:1px solid #fff;border-bottom:1px solid #fff;background:#fff"></div>
<div class="a" style="left:160px;top:152px;width:1194px;height:473px;border-top:1px solid #404040;border-left:1px solid #404040;border-right:1px solid #D4D0C8;border-bottom:1px solid #D4D0C8"></div>
<div class="a" style="left:161px;top:153px;width:1192px;height:455px;overflow:hidden">
<div class="a" style="left:1px;top:0;width:75px;height:19px;background:#D4D0C8;border-top:1px solid #fff;border-left:1px solid #fff;border-right:1px solid #404040;border-bottom:1px solid #404040;box-shadow:inset -1px -1px 0 #808080, inset 0 1px 0 #fff"></div>
<div class="t" style="left:0px;top:4px;width:75px;text-align:left;padding-left:2px;overflow:hidden;letter-spacing:-0.25px">Resort</div>
<div class="a" style="left:76px;top:0;width:246px;height:19px;background:#D4D0C8;border-top:1px solid #fff;border-left:1px solid #fff;border-right:1px solid #404040;border-bottom:1px solid #404040;box-shadow:inset -1px -1px 0 #808080, inset 0 1px 0 #fff"></div>
<div class="t" style="left:75px;top:4px;width:246px;text-align:left;padding-left:2px;overflow:hidden;letter-spacing:-0.25px">Accommodation</div>
<div class="a" style="left:322px;top:0;width:40px;height:19px;background:#D4D0C8;border-top:1px solid #fff;border-left:1px solid #fff;border-right:1px solid #404040;border-bottom:1px solid #404040;box-shadow:inset -1px -1px 0 #808080, inset 0 1px 0 #fff"></div>
<div class="t" style="left:321px;top:4px;width:40px;text-align:left;padding-left:2px;overflow:hidden;letter-spacing:-0.25px">Rati<span style="letter-spacing:1.1px;margin-left:1px">...</span></div>
<div class="a" style="left:362px;top:0;width:75px;height:19px;background:#D4D0C8;border-top:1px solid #fff;border-left:1px solid #fff;border-right:1px solid #404040;border-bottom:1px solid #404040;box-shadow:inset -1px -1px 0 #808080, inset 0 1px 0 #fff"></div>
<div class="t" style="left:361px;top:4px;width:75px;text-align:left;padding-left:2px;overflow:hidden;letter-spacing:-0.25px">Board</div>
<div class="a" style="left:437px;top:0;width:90px;height:19px;background:#D4D0C8;border-top:1px solid #fff;border-left:1px solid #fff;border-right:1px solid #404040;border-bottom:1px solid #404040;box-shadow:inset -1px -1px 0 #808080, inset 0 1px 0 #fff"></div>
<div class="t" style="left:436px;top:4px;width:90px;text-align:left;padding-left:2px;overflow:hidden;letter-spacing:-0.25px">Room type</div>
<div class="a" style="left:527px;top:0;width:35px;height:19px;background:#D4D0C8;border-top:1px solid #fff;border-left:1px solid #fff;border-right:1px solid #404040;border-bottom:1px solid #404040;box-shadow:inset -1px -1px 0 #808080, inset 0 1px 0 #fff"></div>
<div class="t" style="left:526px;top:4px;width:35px;text-align:left;padding-left:2px;overflow:hidden;letter-spacing:-0.25px">DOW</div>
<div class="a" style="left:562px;top:0;width:68px;height:19px;background:#D4D0C8;border-top:1px solid #fff;border-left:1px solid #fff;border-right:1px solid #404040;border-bottom:1px solid #404040;box-shadow:inset -1px -1px 0 #808080, inset 0 1px 0 #fff"></div>
<div class="t" style="left:561px;top:4px;width:68px;text-align:left;padding-left:2px;overflow:hidden;letter-spacing:-0.25px">Check In</div>
<div class="a" style="left:630px;top:0;width:35px;height:19px;background:#D4D0C8;border-top:1px solid #fff;border-left:1px solid #fff;border-right:1px solid #404040;border-bottom:1px solid #404040;box-shadow:inset -1px -1px 0 #808080, inset 0 1px 0 #fff"></div>
<div class="t" style="left:629px;top:4px;width:35px;text-align:left;padding-left:2px;overflow:hidden;letter-spacing:-0.25px">DOW</div>
<div class="a" style="left:665px;top:0;width:68px;height:19px;background:#D4D0C8;border-top:1px solid #fff;border-left:1px solid #fff;border-right:1px solid #404040;border-bottom:1px solid #404040;box-shadow:inset -1px -1px 0 #808080, inset 0 1px 0 #fff"></div>
<div class="t" style="left:664px;top:4px;width:68px;text-align:left;padding-left:2px;overflow:hidden;letter-spacing:-0.25px">Check Out</div>
<div class="a" style="left:733px;top:0;width:62px;height:19px;background:#D4D0C8;border-top:1px solid #fff;border-left:1px solid #fff;border-right:1px solid #404040;border-bottom:1px solid #404040;box-shadow:inset -1px -1px 0 #808080, inset 0 1px 0 #fff"></div>
<div class="t" style="left:732px;top:4px;width:62px;text-align:left;padding-left:2px;overflow:hidden;letter-spacing:-0.25px">Supplier</div>
<div class="a" style="left:795px;top:0;width:25px;height:19px;background:#D4D0C8;border-top:1px solid #fff;border-left:1px solid #fff;border-right:1px solid #404040;border-bottom:1px solid #404040;box-shadow:inset -1px -1px 0 #808080, inset 0 1px 0 #fff"></div>
<div class="t" style="left:794px;top:4px;width:25px;text-align:center;padding-left:1px;overflow:hidden;letter-spacing:-0.25px">Er</div>
<div class="a" style="left:820px;top:0;width:25px;height:19px;background:#D4D0C8;border-top:1px solid #fff;border-left:1px solid #fff;border-right:1px solid #404040;border-bottom:1px solid #404040;box-shadow:inset -1px -1px 0 #808080, inset 0 1px 0 #fff"></div>
<div class="t" style="left:819px;top:4px;width:25px;text-align:center;padding-left:1px;overflow:hidden;letter-spacing:-0.25px">NR</div>
<div class="a" style="left:845px;top:0;width:25px;height:19px;background:#D4D0C8;border-top:1px solid #fff;border-left:1px solid #fff;border-right:1px solid #404040;border-bottom:1px solid #404040;box-shadow:inset -1px -1px 0 #808080, inset 0 1px 0 #fff"></div>
<div class="t" style="left:844px;top:4px;width:25px;text-align:center;padding-left:1px;overflow:hidden;letter-spacing:-0.25px">MS</div>
<div class="a" style="left:870px;top:0;width:55px;height:19px;background:#D4D0C8;border-top:1px solid #fff;border-left:1px solid #fff;border-right:1px solid #404040;border-bottom:1px solid #404040;box-shadow:inset -1px -1px 0 #808080, inset 0 1px 0 #fff"></div>
<div class="t" style="left:869px;top:4px;width:55px;text-align:right;padding-right:2px;overflow:hidden;letter-spacing:-0.25px">Price</div>
<div class="a" style="left:925px;top:0;width:55px;height:19px;background:#D4D0C8;border-top:1px solid #fff;border-left:1px solid #fff;border-right:1px solid #404040;border-bottom:1px solid #404040;box-shadow:inset -1px -1px 0 #808080, inset 0 1px 0 #fff"></div>
<div class="t" style="left:924px;top:4px;width:55px;text-align:right;padding-right:2px;overflow:hidden;letter-spacing:-0.25px">Incl.Fl.PP</div>
<div class="a" style="left:980px;top:0;width:65px;height:19px;background:#D4D0C8;border-top:1px solid #fff;border-left:1px solid #fff;border-right:1px solid #404040;border-bottom:1px solid #404040;box-shadow:inset -1px -1px 0 #808080, inset 0 1px 0 #fff"></div>
<div class="t" style="left:979px;top:4px;width:65px;text-align:right;padding-right:2px;overflow:hidden;letter-spacing:-0.25px">Basket</div>
<div class="a" style="left:1045px;top:0;width:55px;height:19px;background:#D4D0C8;border-top:1px solid #fff;border-left:1px solid #fff;border-right:1px solid #404040;border-bottom:1px solid #404040;box-shadow:inset -1px -1px 0 #808080, inset 0 1px 0 #fff"></div>
<div class="t" style="left:1044px;top:4px;width:55px;text-align:right;padding-right:2px;overflow:hidden;letter-spacing:-0.25px">Discount</div>
<div class="a" style="left:1100px;top:0;width:25px;height:19px;background:#D4D0C8;border-top:1px solid #fff;border-left:1px solid #fff;border-right:1px solid #404040;border-bottom:1px solid #404040;box-shadow:inset -1px -1px 0 #808080, inset 0 1px 0 #fff"></div>
<div class="t" style="left:1099px;top:4px;width:25px;text-align:center;padding-left:1px;overflow:hidden;letter-spacing:-0.25px">Of</div>
<div class="a" style="left:1125px;top:0;width:60px;height:19px;background:#D4D0C8;border-top:1px solid #fff;border-left:1px solid #fff;border-right:1px solid #404040;border-bottom:1px solid #404040;box-shadow:inset -1px -1px 0 #808080, inset 0 1px 0 #fff"></div>
<div class="t" style="left:1124px;top:4px;width:60px;text-align:left;padding-left:2px;overflow:hidden;letter-spacing:-0.25px">Contract</div>
<div class="a" style="left:1185px;top:0;width:55px;height:19px;background:#D4D0C8;border-top:1px solid #fff;border-left:1px solid #fff;border-right:1px solid #404040;border-bottom:1px solid #404040;box-shadow:inset -1px -1px 0 #808080, inset 0 1px 0 #fff"></div>
<div class="t" style="left:1184px;top:4px;width:55px;text-align:left;padding-left:2px;overflow:hidden;letter-spacing:-0.25px">A</div>
<svg class="a" style="left:296px;top:3px" width="24" height="12" viewBox="0 0 24 12"><defs><linearGradient id="hfun" x1="0" x2="1"><stop offset="0" stop-color="#fff"/><stop offset="1" stop-color="#7898D0"/></linearGradient></defs><path d="M1.5 1.5 H13.5 L9 6.5 V10.5 H6 V6.5Z" fill="url(#hfun)" stroke="#000" stroke-width="1.6" stroke-linejoin="miter"/><path d="M16 3.8 H23 L19.5 7.8Z" fill="#8A8A8A"/></svg>
<div class="a" style="left:0;top:19px;width:1192px;height:120px;background:#D4D0C8"></div>
<div class="a" style="left:1px;top:19px;width:1253px;height:15px;background:#0A246A"></div>
<div class="t" style="left:0px;top:20px;width:75px;text-align:left;padding-left:2px;color:#fff;overflow:hidden;letter-spacing:-0.25px">Internation<span style="letter-spacing:1.1px;margin-left:1px">...</span></div>
<div class="t" style="left:75px;top:20px;width:246px;text-align:left;padding-left:2px;color:#fff;overflow:hidden;letter-spacing:-0.25px">Enclave Suites</div>
<div class="t" style="left:321px;top:20px;width:40px;text-align:left;padding-left:2px;color:#fff;overflow:hidden;letter-spacing:0.1px">3.0</div>
<div class="t" style="left:361px;top:20px;width:75px;text-align:left;padding-left:2px;color:#fff;overflow:hidden;letter-spacing:-0.25px">Bed And Br<span style="letter-spacing:1.1px;margin-left:1px">...</span></div>
<div class="t" style="left:436px;top:20px;width:90px;text-align:left;padding-left:2px;color:#fff;overflow:hidden;letter-spacing:-0.25px">Deluxe Studio</div>
<div class="t" style="left:526px;top:20px;width:35px;text-align:left;padding-left:2px;color:#fff;overflow:hidden;letter-spacing:-0.25px">Thu</div>
<div class="t" style="left:561px;top:20px;width:68px;text-align:left;padding-left:2px;color:#fff;overflow:hidden;letter-spacing:0.1px">26/07/2018</div>
<div class="t" style="left:629px;top:20px;width:35px;text-align:left;padding-left:2px;color:#fff;overflow:hidden;letter-spacing:-0.25px">Thu</div>
<div class="t" style="left:664px;top:20px;width:68px;text-align:left;padding-left:2px;color:#fff;overflow:hidden;letter-spacing:0.1px">09/08/2018</div>
<div class="t" style="left:732px;top:20px;width:62px;text-align:left;padding-left:2px;color:#fff;overflow:hidden;letter-spacing:-0.25px">Ocean B<span style="letter-spacing:1.1px;margin-left:1px">...</span></div>
<div class="t" style="left:869px;top:20px;width:55px;text-align:right;padding-right:2px;color:#fff;overflow:hidden;letter-spacing:0.1px">833.10</div>
<div class="t" style="left:924px;top:20px;width:55px;text-align:right;padding-right:2px;color:#fff;overflow:hidden;letter-spacing:0.1px">416.55</div>
<div class="t" style="left:979px;top:20px;width:65px;text-align:right;padding-right:2px;color:#fff;overflow:hidden;letter-spacing:0.1px">833.10</div>
<div class="t" style="left:1044px;top:20px;width:55px;text-align:right;padding-right:2px;color:#fff;overflow:hidden;letter-spacing:0.1px">0.00</div>
<div class="t" style="left:1124px;top:20px;width:60px;text-align:left;padding-left:2px;color:#fff;overflow:hidden;letter-spacing:-0.25px">XML</div>
<div class="a" style="left:1px;top:34px;width:74px;height:14px;background:#BFDFFD"></div>
<div class="t" style="left:0px;top:35px;width:75px;text-align:left;padding-left:2px;color:#000;overflow:hidden;letter-spacing:-0.25px">Internation<span style="letter-spacing:1.1px;margin-left:1px">...</span></div>
<div class="a" style="left:76px;top:34px;width:245px;height:14px;background:#BFDFFD"></div>
<div class="t" style="left:75px;top:35px;width:246px;text-align:left;padding-left:2px;color:#000;overflow:hidden;letter-spacing:-0.25px">Enclave Suites</div>
<div class="a" style="left:322px;top:34px;width:39px;height:14px;background:#BFDFFD"></div>
<div class="t" style="left:321px;top:35px;width:40px;text-align:left;padding-left:2px;color:#000;overflow:hidden;letter-spacing:0.1px">3.0</div>
<div class="a" style="left:362px;top:34px;width:74px;height:14px;background:#BFDFFD"></div>
<div class="t" style="left:361px;top:35px;width:75px;text-align:left;padding-left:2px;color:#000;overflow:hidden;letter-spacing:-0.25px">Bed And Br<span style="letter-spacing:1.1px;margin-left:1px">...</span></div>
<div class="a" style="left:437px;top:34px;width:89px;height:14px;background:#BFDFFD"></div>
<div class="t" style="left:436px;top:35px;width:90px;text-align:left;padding-left:2px;color:#000;overflow:hidden;letter-spacing:-0.25px">2 Bedroom Suite</div>
<div class="a" style="left:527px;top:34px;width:34px;height:14px;background:#BFDFFD"></div>
<div class="t" style="left:526px;top:35px;width:35px;text-align:left;padding-left:2px;color:#000;overflow:hidden;letter-spacing:-0.25px">Thu</div>
<div class="a" style="left:562px;top:34px;width:67px;height:14px;background:#BFDFFD"></div>
<div class="t" style="left:561px;top:35px;width:68px;text-align:left;padding-left:2px;color:#000;overflow:hidden;letter-spacing:0.1px">26/07/2018</div>
<div class="a" style="left:630px;top:34px;width:34px;height:14px;background:#BFDFFD"></div>
<div class="t" style="left:629px;top:35px;width:35px;text-align:left;padding-left:2px;color:#000;overflow:hidden;letter-spacing:-0.25px">Thu</div>
<div class="a" style="left:665px;top:34px;width:67px;height:14px;background:#BFDFFD"></div>
<div class="t" style="left:664px;top:35px;width:68px;text-align:left;padding-left:2px;color:#000;overflow:hidden;letter-spacing:0.1px">09/08/2018</div>
<div class="a" style="left:733px;top:34px;width:61px;height:14px;background:#BFDFFD"></div>
<div class="t" style="left:732px;top:35px;width:62px;text-align:left;padding-left:2px;color:#000;overflow:hidden;letter-spacing:-0.25px">Ocean B<span style="letter-spacing:1.1px;margin-left:1px">...</span></div>
<div class="a" style="left:795px;top:34px;width:24px;height:14px;background:#BFDFFD"></div>
<div class="a" style="left:820px;top:34px;width:24px;height:14px;background:#BFDFFD"></div>
<div class="a" style="left:845px;top:34px;width:24px;height:14px;background:#BFDFFD"></div>
<div class="a" style="left:870px;top:34px;width:54px;height:14px;background:#BFDFFD"></div>
<div class="t" style="left:869px;top:35px;width:55px;text-align:right;padding-right:2px;color:#000;overflow:hidden;letter-spacing:0.1px">1,278.18</div>
<div class="a" style="left:925px;top:34px;width:54px;height:14px;background:#BFDFFD"></div>
<div class="t" style="left:924px;top:35px;width:55px;text-align:right;padding-right:2px;color:#000;overflow:hidden;letter-spacing:0.1px">639.09</div>
<div class="a" style="left:980px;top:34px;width:64px;height:14px;background:#BFDFFD"></div>
<div class="t" style="left:979px;top:35px;width:65px;text-align:right;padding-right:2px;color:#000;overflow:hidden;letter-spacing:0.1px">1,278.18</div>
<div class="a" style="left:1045px;top:34px;width:54px;height:14px;background:#BFDFFD"></div>
<div class="t" style="left:1044px;top:35px;width:55px;text-align:right;padding-right:2px;color:#000;overflow:hidden;letter-spacing:0.1px">0.00</div>
<div class="a" style="left:1100px;top:34px;width:24px;height:14px;background:#BFDFFD"></div>
<div class="a" style="left:1125px;top:34px;width:59px;height:14px;background:#BFDFFD"></div>
<div class="t" style="left:1124px;top:35px;width:60px;text-align:left;padding-left:2px;color:#000;overflow:hidden;letter-spacing:-0.25px">XML</div>
<div class="a" style="left:1185px;top:34px;width:54px;height:14px;background:#BFDFFD"></div>
<div class="a" style="left:1px;top:49px;width:74px;height:14px;background:#BFDFFD"></div>
<div class="t" style="left:0px;top:50px;width:75px;text-align:left;padding-left:2px;color:#000;overflow:hidden;letter-spacing:-0.25px">Internation<span style="letter-spacing:1.1px;margin-left:1px">...</span></div>
<div class="a" style="left:76px;top:49px;width:245px;height:14px;background:#BFDFFD"></div>
<div class="t" style="left:75px;top:50px;width:246px;text-align:left;padding-left:2px;color:#000;overflow:hidden;letter-spacing:-0.25px">Enclave Suites by Sky Hotels &amp; Resorts</div>
<div class="a" style="left:322px;top:49px;width:39px;height:14px;background:#BFDFFD"></div>
<div class="t" style="left:321px;top:50px;width:40px;text-align:left;padding-left:2px;color:#000;overflow:hidden;letter-spacing:-0.25px">3 Stars</div>
<div class="a" style="left:362px;top:49px;width:74px;height:14px;background:#BFDFFD"></div>
<div class="t" style="left:361px;top:50px;width:75px;text-align:left;padding-left:2px;color:#000;overflow:hidden;letter-spacing:-0.25px">Continental<span style="letter-spacing:1.1px;margin-left:1px">...</span></div>
<div class="a" style="left:437px;top:49px;width:89px;height:14px;background:#BFDFFD"></div>
<div class="t" style="left:436px;top:50px;width:90px;text-align:left;padding-left:2px;color:#000;overflow:hidden;letter-spacing:-0.25px">Studio Deluxe</div>
<div class="a" style="left:527px;top:49px;width:34px;height:14px;background:#BFDFFD"></div>
<div class="t" style="left:526px;top:50px;width:35px;text-align:left;padding-left:2px;color:#000;overflow:hidden;letter-spacing:-0.25px">Thu</div>
<div class="a" style="left:562px;top:49px;width:67px;height:14px;background:#BFDFFD"></div>
<div class="t" style="left:561px;top:50px;width:68px;text-align:left;padding-left:2px;color:#000;overflow:hidden;letter-spacing:0.1px">26/07/2018</div>
<div class="a" style="left:630px;top:49px;width:34px;height:14px;background:#BFDFFD"></div>
<div class="t" style="left:629px;top:50px;width:35px;text-align:left;padding-left:2px;color:#000;overflow:hidden;letter-spacing:-0.25px">Thu</div>
<div class="a" style="left:665px;top:49px;width:67px;height:14px;background:#BFDFFD"></div>
<div class="t" style="left:664px;top:50px;width:68px;text-align:left;padding-left:2px;color:#000;overflow:hidden;letter-spacing:0.1px">09/08/2018</div>
<div class="a" style="left:733px;top:49px;width:61px;height:14px;background:#BFDFFD"></div>
<div class="t" style="left:732px;top:50px;width:62px;text-align:left;padding-left:2px;color:#000;overflow:hidden;letter-spacing:-0.25px">Hotelbeds</div>
<div class="a" style="left:795px;top:49px;width:24px;height:14px;background:#BFDFFD"></div>
<div class="a" style="left:820px;top:49px;width:24px;height:14px;background:#BFDFFD"></div>
<div class="a" style="left:845px;top:49px;width:24px;height:14px;background:#BFDFFD"></div>
<div class="a" style="left:870px;top:49px;width:54px;height:14px;background:#BFDFFD"></div>
<div class="t" style="left:869px;top:50px;width:55px;text-align:right;padding-right:2px;color:#000;overflow:hidden;letter-spacing:0.1px">852.72</div>
<div class="a" style="left:925px;top:49px;width:54px;height:14px;background:#BFDFFD"></div>
<div class="t" style="left:924px;top:50px;width:55px;text-align:right;padding-right:2px;color:#000;overflow:hidden;letter-spacing:0.1px">426.36</div>
<div class="a" style="left:980px;top:49px;width:64px;height:14px;background:#BFDFFD"></div>
<div class="t" style="left:979px;top:50px;width:65px;text-align:right;padding-right:2px;color:#000;overflow:hidden;letter-spacing:0.1px">852.72</div>
<div class="a" style="left:1045px;top:49px;width:54px;height:14px;background:#BFDFFD"></div>
<div class="t" style="left:1044px;top:50px;width:55px;text-align:right;padding-right:2px;color:#000;overflow:hidden;letter-spacing:0.1px">0.00</div>
<div class="a" style="left:1100px;top:49px;width:24px;height:14px;background:#BFDFFD"></div>
<div class="a" style="left:1125px;top:49px;width:59px;height:14px;background:#BFDFFD"></div>
<div class="t" style="left:1124px;top:50px;width:60px;text-align:left;padding-left:2px;color:#000;overflow:hidden;letter-spacing:-0.25px">XML</div>
<div class="a" style="left:1185px;top:49px;width:54px;height:14px;background:#BFDFFD"></div>
<div class="a" style="left:1px;top:64px;width:74px;height:14px;background:#BFDFFD"></div>
<div class="t" style="left:0px;top:65px;width:75px;text-align:left;padding-left:2px;color:#000;overflow:hidden;letter-spacing:-0.25px">Internation<span style="letter-spacing:1.1px;margin-left:1px">...</span></div>
<div class="a" style="left:76px;top:64px;width:245px;height:14px;background:#BFDFFD"></div>
<div class="t" style="left:75px;top:65px;width:246px;text-align:left;padding-left:2px;color:#000;overflow:hidden;letter-spacing:-0.25px">Enclave Suites by Sky Hotels &amp; Resorts</div>
<div class="a" style="left:322px;top:64px;width:39px;height:14px;background:#BFDFFD"></div>
<div class="t" style="left:321px;top:65px;width:40px;text-align:left;padding-left:2px;color:#000;overflow:hidden;letter-spacing:-0.25px">3 Stars</div>
<div class="a" style="left:362px;top:64px;width:74px;height:14px;background:#BFDFFD"></div>
<div class="t" style="left:361px;top:65px;width:75px;text-align:left;padding-left:2px;color:#000;overflow:hidden;letter-spacing:-0.25px">Continental<span style="letter-spacing:1.1px;margin-left:1px">...</span></div>
<div class="a" style="left:437px;top:64px;width:89px;height:14px;background:#BFDFFD"></div>
<div class="t" style="left:436px;top:65px;width:90px;text-align:left;padding-left:2px;color:#000;overflow:hidden;letter-spacing:-0.25px">Apartment Tw<span style="letter-spacing:1.1px;margin-left:1px">...</span></div>
<div class="a" style="left:527px;top:64px;width:34px;height:14px;background:#BFDFFD"></div>
<div class="t" style="left:526px;top:65px;width:35px;text-align:left;padding-left:2px;color:#000;overflow:hidden;letter-spacing:-0.25px">Thu</div>
<div class="a" style="left:562px;top:64px;width:67px;height:14px;background:#BFDFFD"></div>
<div class="t" style="left:561px;top:65px;width:68px;text-align:left;padding-left:2px;color:#000;overflow:hidden;letter-spacing:0.1px">26/07/2018</div>
<div class="a" style="left:630px;top:64px;width:34px;height:14px;background:#BFDFFD"></div>
<div class="t" style="left:629px;top:65px;width:35px;text-align:left;padding-left:2px;color:#000;overflow:hidden;letter-spacing:-0.25px">Thu</div>
<div class="a" style="left:665px;top:64px;width:67px;height:14px;background:#BFDFFD"></div>
<div class="t" style="left:664px;top:65px;width:68px;text-align:left;padding-left:2px;color:#000;overflow:hidden;letter-spacing:0.1px">09/08/2018</div>
<div class="a" style="left:733px;top:64px;width:61px;height:14px;background:#BFDFFD"></div>
<div class="t" style="left:732px;top:65px;width:62px;text-align:left;padding-left:2px;color:#000;overflow:hidden;letter-spacing:-0.25px">Hotelbeds</div>
<div class="a" style="left:795px;top:64px;width:24px;height:14px;background:#BFDFFD"></div>
<div class="a" style="left:820px;top:64px;width:24px;height:14px;background:#BFDFFD"></div>
<div class="a" style="left:845px;top:64px;width:24px;height:14px;background:#BFDFFD"></div>
<div class="a" style="left:870px;top:64px;width:54px;height:14px;background:#BFDFFD"></div>
<div class="t" style="left:869px;top:65px;width:55px;text-align:right;padding-right:2px;color:#000;overflow:hidden;letter-spacing:0.1px">1,309.75</div>
<div class="a" style="left:925px;top:64px;width:54px;height:14px;background:#BFDFFD"></div>
<div class="t" style="left:924px;top:65px;width:55px;text-align:right;padding-right:2px;color:#000;overflow:hidden;letter-spacing:0.1px">654.88</div>
<div class="a" style="left:980px;top:64px;width:64px;height:14px;background:#BFDFFD"></div>
<div class="t" style="left:979px;top:65px;width:65px;text-align:right;padding-right:2px;color:#000;overflow:hidden;letter-spacing:0.1px">1,309.75</div>
<div class="a" style="left:1045px;top:64px;width:54px;height:14px;background:#BFDFFD"></div>
<div class="t" style="left:1044px;top:65px;width:55px;text-align:right;padding-right:2px;color:#000;overflow:hidden;letter-spacing:0.1px">0.00</div>
<div class="a" style="left:1100px;top:64px;width:24px;height:14px;background:#BFDFFD"></div>
<div class="a" style="left:1125px;top:64px;width:59px;height:14px;background:#BFDFFD"></div>
<div class="t" style="left:1124px;top:65px;width:60px;text-align:left;padding-left:2px;color:#000;overflow:hidden;letter-spacing:-0.25px">XML</div>
<div class="a" style="left:1185px;top:64px;width:54px;height:14px;background:#BFDFFD"></div>
<div class="a" style="left:1px;top:79px;width:74px;height:14px;background:#BFDFFD"></div>
<div class="t" style="left:0px;top:80px;width:75px;text-align:left;padding-left:2px;color:#000;overflow:hidden;letter-spacing:-0.25px">Orlando Int<span style="letter-spacing:1.1px;margin-left:1px">...</span></div>
<div class="a" style="left:76px;top:79px;width:245px;height:14px;background:#BFDFFD"></div>
<div class="t" style="left:75px;top:80px;width:246px;text-align:left;padding-left:2px;color:#000;overflow:hidden;letter-spacing:-0.25px">The Enclave Hotel &amp; Suites</div>
<div class="a" style="left:322px;top:79px;width:39px;height:14px;background:#BFDFFD"></div>
<div class="t" style="left:321px;top:80px;width:40px;text-align:left;padding-left:2px;color:#000;overflow:hidden;letter-spacing:0.1px">3.0</div>
<div class="a" style="left:362px;top:79px;width:74px;height:14px;background:#BFDFFD"></div>
<div class="t" style="left:361px;top:80px;width:75px;text-align:left;padding-left:2px;color:#000;overflow:hidden;letter-spacing:-0.25px">Bed &amp; Brea<span style="letter-spacing:1.1px;margin-left:1px">...</span></div>
<div class="a" style="left:437px;top:79px;width:89px;height:14px;background:#BFDFFD"></div>
<div class="t" style="left:436px;top:80px;width:90px;text-align:left;padding-left:2px;color:#000;overflow:hidden;letter-spacing:-0.25px">Studio (2 People)</div>
<div class="a" style="left:527px;top:79px;width:34px;height:14px;background:#BFDFFD"></div>
<div class="t" style="left:526px;top:80px;width:35px;text-align:left;padding-left:2px;color:#000;overflow:hidden;letter-spacing:-0.25px">Thu</div>
<div class="a" style="left:562px;top:79px;width:67px;height:14px;background:#BFDFFD"></div>
<div class="t" style="left:561px;top:80px;width:68px;text-align:left;padding-left:2px;color:#000;overflow:hidden;letter-spacing:0.1px">26/07/2018</div>
<div class="a" style="left:630px;top:79px;width:34px;height:14px;background:#BFDFFD"></div>
<div class="t" style="left:629px;top:80px;width:35px;text-align:left;padding-left:2px;color:#000;overflow:hidden;letter-spacing:-0.25px">Thu</div>
<div class="a" style="left:665px;top:79px;width:67px;height:14px;background:#BFDFFD"></div>
<div class="t" style="left:664px;top:80px;width:68px;text-align:left;padding-left:2px;color:#000;overflow:hidden;letter-spacing:0.1px">09/08/2018</div>
<div class="a" style="left:733px;top:79px;width:61px;height:14px;background:#BFDFFD"></div>
<div class="t" style="left:732px;top:80px;width:62px;text-align:left;padding-left:2px;color:#000;overflow:hidden;letter-spacing:-0.25px">Get A Bed</div>
<div class="a" style="left:795px;top:79px;width:24px;height:14px;background:#BFDFFD"></div>
<div class="t" style="left:794px;top:80px;width:25px;text-align:center;padding-left:1px;color:#000;overflow:hidden;letter-spacing:-0.25px"><span style="font-size:15px;position:relative;top:-1px;font-weight:bold">*</span></div>
<div class="a" style="left:820px;top:79px;width:24px;height:14px;background:#BFDFFD"></div>
<div class="a" style="left:845px;top:79px;width:24px;height:14px;background:#BFDFFD"></div>
<div class="a" style="left:870px;top:79px;width:54px;height:14px;background:#BFDFFD"></div>
<div class="t" style="left:869px;top:80px;width:55px;text-align:right;padding-right:2px;color:#000;overflow:hidden;letter-spacing:0.1px">929.22</div>
<div class="a" style="left:925px;top:79px;width:54px;height:14px;background:#BFDFFD"></div>
<div class="t" style="left:924px;top:80px;width:55px;text-align:right;padding-right:2px;color:#000;overflow:hidden;letter-spacing:0.1px">464.61</div>
<div class="a" style="left:980px;top:79px;width:64px;height:14px;background:#BFDFFD"></div>
<div class="t" style="left:979px;top:80px;width:65px;text-align:right;padding-right:2px;color:#000;overflow:hidden;letter-spacing:0.1px">929.22</div>
<div class="a" style="left:1045px;top:79px;width:54px;height:14px;background:#BFDFFD"></div>
<div class="t" style="left:1044px;top:80px;width:55px;text-align:right;padding-right:2px;color:#000;overflow:hidden;letter-spacing:0.1px">0.00</div>
<div class="a" style="left:1100px;top:79px;width:24px;height:14px;background:#BFDFFD"></div>
<div class="a" style="left:1125px;top:79px;width:59px;height:14px;background:#BFDFFD"></div>
<div class="t" style="left:1124px;top:80px;width:60px;text-align:left;padding-left:2px;color:#000;overflow:hidden;letter-spacing:-0.25px">XML</div>
<div class="a" style="left:1185px;top:79px;width:54px;height:14px;background:#BFDFFD"></div>
<div class="a" style="left:1px;top:94px;width:74px;height:14px;background:#BFDFFD"></div>
<div class="t" style="left:0px;top:95px;width:75px;text-align:left;padding-left:2px;color:#000;overflow:hidden;letter-spacing:-0.25px">Orlando Int<span style="letter-spacing:1.1px;margin-left:1px">...</span></div>
<div class="a" style="left:76px;top:94px;width:245px;height:14px;background:#BFDFFD"></div>
<div class="t" style="left:75px;top:95px;width:246px;text-align:left;padding-left:2px;color:#000;overflow:hidden;letter-spacing:-0.25px">The Enclave Hotel &amp; Suites</div>
<div class="a" style="left:322px;top:94px;width:39px;height:14px;background:#BFDFFD"></div>
<div class="t" style="left:321px;top:95px;width:40px;text-align:left;padding-left:2px;color:#000;overflow:hidden;letter-spacing:0.1px">3.0</div>
<div class="a" style="left:362px;top:94px;width:74px;height:14px;background:#BFDFFD"></div>
<div class="t" style="left:361px;top:95px;width:75px;text-align:left;padding-left:2px;color:#000;overflow:hidden;letter-spacing:-0.25px">Room Only</div>
<div class="a" style="left:437px;top:94px;width:89px;height:14px;background:#BFDFFD"></div>
<div class="t" style="left:436px;top:95px;width:90px;text-align:left;padding-left:2px;color:#000;overflow:hidden;letter-spacing:-0.25px">Deluxe Studio <span style="letter-spacing:1.1px;margin-left:1px">...</span></div>
<div class="a" style="left:527px;top:94px;width:34px;height:14px;background:#BFDFFD"></div>
<div class="t" style="left:526px;top:95px;width:35px;text-align:left;padding-left:2px;color:#000;overflow:hidden;letter-spacing:-0.25px">Thu</div>
<div class="a" style="left:562px;top:94px;width:67px;height:14px;background:#BFDFFD"></div>
<div class="t" style="left:561px;top:95px;width:68px;text-align:left;padding-left:2px;color:#000;overflow:hidden;letter-spacing:0.1px">26/07/2018</div>
<div class="a" style="left:630px;top:94px;width:34px;height:14px;background:#BFDFFD"></div>
<div class="t" style="left:629px;top:95px;width:35px;text-align:left;padding-left:2px;color:#000;overflow:hidden;letter-spacing:-0.25px">Thu</div>
<div class="a" style="left:665px;top:94px;width:67px;height:14px;background:#BFDFFD"></div>
<div class="t" style="left:664px;top:95px;width:68px;text-align:left;padding-left:2px;color:#000;overflow:hidden;letter-spacing:0.1px">09/08/2018</div>
<div class="a" style="left:733px;top:94px;width:61px;height:14px;background:#BFDFFD"></div>
<div class="t" style="left:732px;top:95px;width:62px;text-align:left;padding-left:2px;color:#000;overflow:hidden;letter-spacing:-0.25px">Get A Bed</div>
<div class="a" style="left:795px;top:94px;width:24px;height:14px;background:#BFDFFD"></div>
<div class="t" style="left:794px;top:95px;width:25px;text-align:center;padding-left:1px;color:#000;overflow:hidden;letter-spacing:-0.25px"><span style="font-size:15px;position:relative;top:-1px;font-weight:bold">*</span></div>
<div class="a" style="left:820px;top:94px;width:24px;height:14px;background:#BFDFFD"></div>
<div class="a" style="left:845px;top:94px;width:24px;height:14px;background:#BFDFFD"></div>
<div class="a" style="left:870px;top:94px;width:54px;height:14px;background:#BFDFFD"></div>
<div class="t" style="left:869px;top:95px;width:55px;text-align:right;padding-right:2px;color:#000;overflow:hidden;letter-spacing:0.1px">973.38</div>
<div class="a" style="left:925px;top:94px;width:54px;height:14px;background:#BFDFFD"></div>
<div class="t" style="left:924px;top:95px;width:55px;text-align:right;padding-right:2px;color:#000;overflow:hidden;letter-spacing:0.1px">486.69</div>
<div class="a" style="left:980px;top:94px;width:64px;height:14px;background:#BFDFFD"></div>
<div class="t" style="left:979px;top:95px;width:65px;text-align:right;padding-right:2px;color:#000;overflow:hidden;letter-spacing:0.1px">973.38</div>
<div class="a" style="left:1045px;top:94px;width:54px;height:14px;background:#BFDFFD"></div>
<div class="t" style="left:1044px;top:95px;width:55px;text-align:right;padding-right:2px;color:#000;overflow:hidden;letter-spacing:0.1px">0.00</div>
<div class="a" style="left:1100px;top:94px;width:24px;height:14px;background:#BFDFFD"></div>
<div class="a" style="left:1125px;top:94px;width:59px;height:14px;background:#BFDFFD"></div>
<div class="t" style="left:1124px;top:95px;width:60px;text-align:left;padding-left:2px;color:#000;overflow:hidden;letter-spacing:-0.25px">XML</div>
<div class="a" style="left:1185px;top:94px;width:54px;height:14px;background:#BFDFFD"></div>
<div class="a" style="left:1px;top:109px;width:74px;height:14px;background:#BFDFFD"></div>
<div class="t" style="left:0px;top:110px;width:75px;text-align:left;padding-left:2px;color:#000;overflow:hidden;letter-spacing:-0.25px">Orlando Int<span style="letter-spacing:1.1px;margin-left:1px">...</span></div>
<div class="a" style="left:76px;top:109px;width:245px;height:14px;background:#BFDFFD"></div>
<div class="t" style="left:75px;top:110px;width:246px;text-align:left;padding-left:2px;color:#000;overflow:hidden;letter-spacing:-0.25px">The Enclave Hotel &amp; Suites</div>
<div class="a" style="left:322px;top:109px;width:39px;height:14px;background:#BFDFFD"></div>
<div class="t" style="left:321px;top:110px;width:40px;text-align:left;padding-left:2px;color:#000;overflow:hidden;letter-spacing:0.1px">3.0</div>
<div class="a" style="left:362px;top:109px;width:74px;height:14px;background:#BFDFFD"></div>
<div class="t" style="left:361px;top:110px;width:75px;text-align:left;padding-left:2px;color:#000;overflow:hidden;letter-spacing:-0.25px">Bed &amp; Brea<span style="letter-spacing:1.1px;margin-left:1px">...</span></div>
<div class="a" style="left:437px;top:109px;width:89px;height:14px;background:#BFDFFD"></div>
<div class="t" style="left:436px;top:110px;width:90px;text-align:left;padding-left:2px;color:#000;overflow:hidden;letter-spacing:-0.25px">Suite (2 Rooms<span style="letter-spacing:1.1px;margin-left:1px">...</span></div>
<div class="a" style="left:527px;top:109px;width:34px;height:14px;background:#BFDFFD"></div>
<div class="t" style="left:526px;top:110px;width:35px;text-align:left;padding-left:2px;color:#000;overflow:hidden;letter-spacing:-0.25px">Thu</div>
<div class="a" style="left:562px;top:109px;width:67px;height:14px;background:#BFDFFD"></div>
<div class="t" style="left:561px;top:110px;width:68px;text-align:left;padding-left:2px;color:#000;overflow:hidden;letter-spacing:0.1px">26/07/2018</div>
<div class="a" style="left:630px;top:109px;width:34px;height:14px;background:#BFDFFD"></div>
<div class="t" style="left:629px;top:110px;width:35px;text-align:left;padding-left:2px;color:#000;overflow:hidden;letter-spacing:-0.25px">Thu</div>
<div class="a" style="left:665px;top:109px;width:67px;height:14px;background:#BFDFFD"></div>
<div class="t" style="left:664px;top:110px;width:68px;text-align:left;padding-left:2px;color:#000;overflow:hidden;letter-spacing:0.1px">09/08/2018</div>
<div class="a" style="left:733px;top:109px;width:61px;height:14px;background:#BFDFFD"></div>
<div class="t" style="left:732px;top:110px;width:62px;text-align:left;padding-left:2px;color:#000;overflow:hidden;letter-spacing:-0.25px">Get A Bed</div>
<div class="a" style="left:795px;top:109px;width:24px;height:14px;background:#BFDFFD"></div>
<div class="t" style="left:794px;top:110px;width:25px;text-align:center;padding-left:1px;color:#000;overflow:hidden;letter-spacing:-0.25px"><span style="font-size:15px;position:relative;top:-1px;font-weight:bold">*</span></div>
<div class="a" style="left:820px;top:109px;width:24px;height:14px;background:#BFDFFD"></div>
<div class="a" style="left:845px;top:109px;width:24px;height:14px;background:#BFDFFD"></div>
<div class="a" style="left:870px;top:109px;width:54px;height:14px;background:#BFDFFD"></div>
<div class="t" style="left:869px;top:110px;width:55px;text-align:right;padding-right:2px;color:#000;overflow:hidden;letter-spacing:0.1px">1,427.55</div>
<div class="a" style="left:925px;top:109px;width:54px;height:14px;background:#BFDFFD"></div>
<div class="t" style="left:924px;top:110px;width:55px;text-align:right;padding-right:2px;color:#000;overflow:hidden;letter-spacing:0.1px">713.78</div>
<div class="a" style="left:980px;top:109px;width:64px;height:14px;background:#BFDFFD"></div>
<div class="t" style="left:979px;top:110px;width:65px;text-align:right;padding-right:2px;color:#000;overflow:hidden;letter-spacing:0.1px">1,427.55</div>
<div class="a" style="left:1045px;top:109px;width:54px;height:14px;background:#BFDFFD"></div>
<div class="t" style="left:1044px;top:110px;width:55px;text-align:right;padding-right:2px;color:#000;overflow:hidden;letter-spacing:0.1px">0.00</div>
<div class="a" style="left:1100px;top:109px;width:24px;height:14px;background:#BFDFFD"></div>
<div class="a" style="left:1125px;top:109px;width:59px;height:14px;background:#BFDFFD"></div>
<div class="t" style="left:1124px;top:110px;width:60px;text-align:left;padding-left:2px;color:#000;overflow:hidden;letter-spacing:-0.25px">XML</div>
<div class="a" style="left:1185px;top:109px;width:54px;height:14px;background:#BFDFFD"></div>
<div class="a" style="left:1px;top:124px;width:74px;height:14px;background:#BFDFFD"></div>
<div class="t" style="left:0px;top:125px;width:75px;text-align:left;padding-left:2px;color:#000;overflow:hidden;letter-spacing:-0.25px">Orlando Int<span style="letter-spacing:1.1px;margin-left:1px">...</span></div>
<div class="a" style="left:76px;top:124px;width:245px;height:14px;background:#BFDFFD"></div>
<div class="t" style="left:75px;top:125px;width:246px;text-align:left;padding-left:2px;color:#000;overflow:hidden;letter-spacing:-0.25px">The Enclave Hotel &amp; Suites</div>
<div class="a" style="left:322px;top:124px;width:39px;height:14px;background:#BFDFFD"></div>
<div class="t" style="left:321px;top:125px;width:40px;text-align:left;padding-left:2px;color:#000;overflow:hidden;letter-spacing:0.1px">3.0</div>
<div class="a" style="left:362px;top:124px;width:74px;height:14px;background:#BFDFFD"></div>
<div class="t" style="left:361px;top:125px;width:75px;text-align:left;padding-left:2px;color:#000;overflow:hidden;letter-spacing:-0.25px">Room Only</div>
<div class="a" style="left:437px;top:124px;width:89px;height:14px;background:#BFDFFD"></div>
<div class="t" style="left:436px;top:125px;width:90px;text-align:left;padding-left:2px;color:#000;overflow:hidden;letter-spacing:-0.25px">2 Bedroom Suit<span style="letter-spacing:1.1px;margin-left:1px">...</span></div>
<div class="a" style="left:527px;top:124px;width:34px;height:14px;background:#BFDFFD"></div>
<div class="t" style="left:526px;top:125px;width:35px;text-align:left;padding-left:2px;color:#000;overflow:hidden;letter-spacing:-0.25px">Thu</div>
<div class="a" style="left:562px;top:124px;width:67px;height:14px;background:#BFDFFD"></div>
<div class="t" style="left:561px;top:125px;width:68px;text-align:left;padding-left:2px;color:#000;overflow:hidden;letter-spacing:0.1px">26/07/2018</div>
<div class="a" style="left:630px;top:124px;width:34px;height:14px;background:#BFDFFD"></div>
<div class="t" style="left:629px;top:125px;width:35px;text-align:left;padding-left:2px;color:#000;overflow:hidden;letter-spacing:-0.25px">Thu</div>
<div class="a" style="left:665px;top:124px;width:67px;height:14px;background:#BFDFFD"></div>
<div class="t" style="left:664px;top:125px;width:68px;text-align:left;padding-left:2px;color:#000;overflow:hidden;letter-spacing:0.1px">09/08/2018</div>
<div class="a" style="left:733px;top:124px;width:61px;height:14px;background:#BFDFFD"></div>
<div class="t" style="left:732px;top:125px;width:62px;text-align:left;padding-left:2px;color:#000;overflow:hidden;letter-spacing:-0.25px">Get A Bed</div>
<div class="a" style="left:795px;top:124px;width:24px;height:14px;background:#BFDFFD"></div>
<div class="t" style="left:794px;top:125px;width:25px;text-align:center;padding-left:1px;color:#000;overflow:hidden;letter-spacing:-0.25px"><span style="font-size:15px;position:relative;top:-1px;font-weight:bold">*</span></div>
<div class="a" style="left:820px;top:124px;width:24px;height:14px;background:#BFDFFD"></div>
<div class="a" style="left:845px;top:124px;width:24px;height:14px;background:#BFDFFD"></div>
<div class="a" style="left:870px;top:124px;width:54px;height:14px;background:#BFDFFD"></div>
<div class="t" style="left:869px;top:125px;width:55px;text-align:right;padding-right:2px;color:#000;overflow:hidden;letter-spacing:0.1px">1,493.32</div>
<div class="a" style="left:925px;top:124px;width:54px;height:14px;background:#BFDFFD"></div>
<div class="t" style="left:924px;top:125px;width:55px;text-align:right;padding-right:2px;color:#000;overflow:hidden;letter-spacing:0.1px">746.66</div>
<div class="a" style="left:980px;top:124px;width:64px;height:14px;background:#BFDFFD"></div>
<div class="t" style="left:979px;top:125px;width:65px;text-align:right;padding-right:2px;color:#000;overflow:hidden;letter-spacing:0.1px">1,493.32</div>
<div class="a" style="left:1045px;top:124px;width:54px;height:14px;background:#BFDFFD"></div>
<div class="t" style="left:1044px;top:125px;width:55px;text-align:right;padding-right:2px;color:#000;overflow:hidden;letter-spacing:0.1px">0.00</div>
<div class="a" style="left:1100px;top:124px;width:24px;height:14px;background:#BFDFFD"></div>
<div class="a" style="left:1125px;top:124px;width:59px;height:14px;background:#BFDFFD"></div>
<div class="t" style="left:1124px;top:125px;width:60px;text-align:left;padding-left:2px;color:#000;overflow:hidden;letter-spacing:-0.25px">XML</div>
<div class="a" style="left:1185px;top:124px;width:54px;height:14px;background:#BFDFFD"></div>
</div>
<div class="a" style="left:161px;top:292px;width:1px;height:1px;background:#fff"></div>
<div class="a" style="left:161px;top:608px;width:16px;height:16px;background:#D4D0C8;border-top:1px solid #D4D0C8;border-left:1px solid #D4D0C8;border-right:1px solid #404040;border-bottom:1px solid #404040;box-shadow:inset 1px 1px 0 #fff, inset -1px -1px 0 #808080"><div class="a" style="left:5px;top:3px;width:0;height:0;border-top:4px solid transparent;border-bottom:4px solid transparent;border-right:4px solid #000"></div></div>
<div class="a" style="left:177px;top:608px;width:1105px;height:16px;background:#D4D0C8;border-right:1px solid #404040;border-bottom:1px solid #404040;box-shadow:inset 1px 1px 0 #fff, inset -1px -1px 0 #808080"></div>
<div class="a" style="left:1282px;top:608px;width:55px;height:16px;background:repeating-conic-gradient(#fff 0 25%, #D4D0C8 0 50%) 0 0/2px 2px"></div>
<div class="a" style="left:1337px;top:608px;width:16px;height:16px;background:#D4D0C8;border-top:1px solid #D4D0C8;border-left:1px solid #D4D0C8;border-right:1px solid #404040;border-bottom:1px solid #404040;box-shadow:inset 1px 1px 0 #fff, inset -1px -1px 0 #808080"><div class="a" style="left:5px;top:3px;width:0;height:0;border-top:4px solid transparent;border-bottom:4px solid transparent;border-left:4px solid #000"></div></div>
<div class="t" style="left:164px;top:651px">First portion: 7.7 sec, total search time: 27.1 sec</div>
<div class="a" style="left:1324px;top:646px;width:23px;height:22px;background:#D4D0C8;border-top:1px solid #fff;border-left:1px solid #fff;border-right:1px solid #404040;border-bottom:1px solid #404040;box-shadow:inset -1px -1px 0 #808080"></div>
<div class="t b" style="left:1332px;top:649px;font-family:'Liberation Serif',serif;font-size:17px;line-height:18px;color:#0850A0">i</div>
<div class="a" style="left:157px;top:673px;width:1200px;height:1px;background:#808080"></div>
<div class="a" style="left:157px;top:674px;width:52px;height:17px;background:#D4D0C8;"></div>
<div class="a" style="left:209px;top:674px;width:1px;height:17px;background:#808080"></div>
<div class="t" style="left:160px;top:676px;color:#000;letter-spacing:-0.427px;">Summary</div>
<div class="a" style="left:210px;top:674px;width:40px;height:17px;background:#D4D0C8;"></div>
<div class="a" style="left:250px;top:674px;width:1px;height:17px;background:#808080"></div>
<div class="t" style="left:213px;top:676px;color:#000;letter-spacing:-0.250px;">Search</div>
<div class="a" style="left:251px;top:674px;width:111px;height:17px;background:#CCFFCC;"></div>
<div class="a" style="left:362px;top:674px;width:1px;height:17px;background:#808080"></div>
<div class="t" style="left:254px;top:676px;color:#000;letter-spacing:-0.379px;">Flt 2A MAN MCO MAN</div>
<div class="a" style="left:363px;top:674px;width:65px;height:17px;background:#0E8A04;border-radius:0 0 2px 2px;top:673px;height:18px;"></div>
<div class="a" style="left:428px;top:674px;width:1px;height:17px;background:#808080"></div>
<div class="t" style="left:366px;top:676px;color:#fff;letter-spacing:-0.440px;">Acc 2A MCO</div>
<div class="a" style="left:429px;top:674px;width:50px;height:17px;background:#CCFFCC;"></div>
<div class="a" style="left:479px;top:674px;width:1px;height:17px;background:#808080"></div>
<div class="t" style="left:432px;top:676px;color:#000;letter-spacing:-0.574px;">Car MCO</div>
<div class="a" style="left:480px;top:674px;width:45px;height:17px;background:#CCFFCC;"></div>
<div class="a" style="left:525px;top:674px;width:1px;height:17px;background:#808080"></div>
<div class="t" style="left:483px;top:676px;color:#000;letter-spacing:0.015px;">Tour 2A</div>
<div class="a" style="left:526px;top:674px;width:95px;height:17px;background:#D4D0C8;"></div>
<div class="a" style="left:621px;top:674px;width:1px;height:17px;background:#808080"></div>
<div class="t" style="left:529px;top:676px;color:#000;letter-spacing:-0.383px;">Financial Summary</div>
<div class="t" style="left:631px;top:700px;letter-spacing:-0.003px;">User: 272 - Dean Jeffries</div>
<div class="t" style="left:763px;top:700px;letter-spacing:-0.092px;">Retailer: 'Ocean-Florida'</div>
<div class="t" style="left:890px;top:700px;letter-spacing:-0.028px;">Client: none</div>
<div class="t" style="left:1304px;top:700px;letter-spacing:-0.377px;">14:32 GMT</div>
<div class="a" style="left:0;top:726px;width:1364px;height:1px;background:#404040"></div>
<div class="a" style="left:0;top:727px;width:1364px;height:1px;background:#808080"></div>
<div class="a" style="left:0;top:728px;width:1364px;height:40px;background:#D4D0C8"></div>
<div class="a" style="left:2px;top:728px;width:52px;height:38px;background:#D4D0C8;border-top:1px solid #fff;border-left:1px solid #fff;border-right:1px solid #404040;border-bottom:1px solid #404040;box-shadow:inset -1px -1px 0 #808080"></div>
<svg class="a" style="left:4px;top:739px" width="16" height="15" viewBox="0 0 16 15"><path d="M1 2 Q4 0 7 2 L6 7 Q3 5 0 7Z" fill="#f05020"/><path d="M8 2 Q11 4 15 2 L14 7 Q11 9 7 7Z" fill="#60c030"/><path d="M0 8 Q3 6 6 8 L5 13 Q2 11 -1 13Z" fill="#2090f0"/><path d="M7 8 Q10 10 14 8 L13 13 Q10 15 6 13Z" fill="#f0c020"/></svg>
<div class="t b" style="left:21px;top:740px;font-size:12px;line-height:14px;letter-spacing:0.539px;">Start</div>
<div class="a" style="left:63px;top:728px;width:160px;height:38px;background:#fff;border-top:1px solid #404040;border-left:1px solid #404040;border-right:1px solid #fff;border-bottom:1px solid #fff;box-shadow:inset 1px 1px 0 #808080"></div>
<svg class="a" style="left:69px;top:736px" width="29" height="23" viewBox="0 0 29 23"><defs><radialGradient id="tic" cx="0.3" cy="0.15" r="0.95"><stop offset="0" stop-color="#FFF070"/><stop offset="0.4" stop-color="#F4B020"/><stop offset="0.8" stop-color="#D06010"/><stop offset="1" stop-color="#B04010"/></radialGradient></defs><path d="M1 9 Q1.5 2 8 1.5 Q18 2.5 28 8.5 L15 21.5 Z" fill="url(#tic)"/></svg>
<div class="t b" style="left:102px;top:740px;font-size:12px;line-height:14px;letter-spacing:0.147px;">Interactive - Ocea...</div>
<div class="a" style="left:1172px;top:728px;width:190px;height:38px;border-top:1px solid #808080;border-left:1px solid #808080;border-right:1px solid #fff;border-bottom:1px solid #fff"></div>
<svg class="a" style="left:1179px;top:739px" width="16" height="16" viewBox="0 0 16 16"><path d="M1 2 L8 1 L8 8 L1 8Z" fill="#f0a020"/><path d="M8 1 L15 3 L15 9 L8 8Z" fill="#2070d0"/><path d="M1 8 L8 8 L8 15 L1 14Z" fill="#40a040"/><path d="M8 8 L15 9 L14 15 L8 15Z" fill="#e03020"/></svg>
<svg class="a" style="left:1203px;top:741px" width="17" height="12" viewBox="0 0 17 12"><rect x="0" y="2" width="13" height="6" fill="#40b040" stroke="#206020" stroke-width="0.8"/><rect x="2" y="8" width="8" height="2" fill="#e0c020"/><rect x="10" y="3" width="2" height="2" fill="#202020"/><path d="M14 1 V9 M14 1 H16" stroke="#404040" stroke-width="1"/></svg>
<svg class="a" style="left:1227px;top:738px" width="17" height="18" viewBox="0 0 17 18"><rect x="5.5" y="3.5" width="10" height="10" fill="#b8b8b8" stroke="#606060"/><rect x="7" y="5" width="7" height="7" fill="#d8d8d8"/><path d="M8 13.5 V16.5 H14" stroke="#606060" fill="none"/><path d="M1.5 0.5 V6.5 H4.5 V0.5 M3 6.5 V16.5 H8" stroke="#404040" fill="#fff"/></svg>
<svg class="a" style="left:1250px;top:739px" width="18" height="17" viewBox="0 0 18 17"><path d="M1 5 H4 L8 1 V15 L4 11 H1Z" fill="#e0e0e0" stroke="#808080"/><circle cx="12.5" cy="11" r="4.5" fill="#e02020"/><path d="M10.5 9 L14.5 13 M14.5 9 L10.5 13" stroke="#fff" stroke-width="1.5"/></svg>
<div class="t" style="left:1295px;top:733px;letter-spacing:0.119px;">14:32</div>
<div class="t" style="left:1280px;top:749px;letter-spacing:0.217px;">05/07/2017</div>
<svg class="a" style="left:1345px;top:741px" width="16" height="14" viewBox="0 0 16 14"><rect x="0" y="0" width="16" height="14" fill="#2060c0"/><rect x="1" y="1" width="14" height="9" fill="#3080e0"/><rect x="0" y="10" width="16" height="4" fill="#303030"/><rect x="1" y="11" width="3" height="2" fill="#f0c020"/></svg></body></html>
